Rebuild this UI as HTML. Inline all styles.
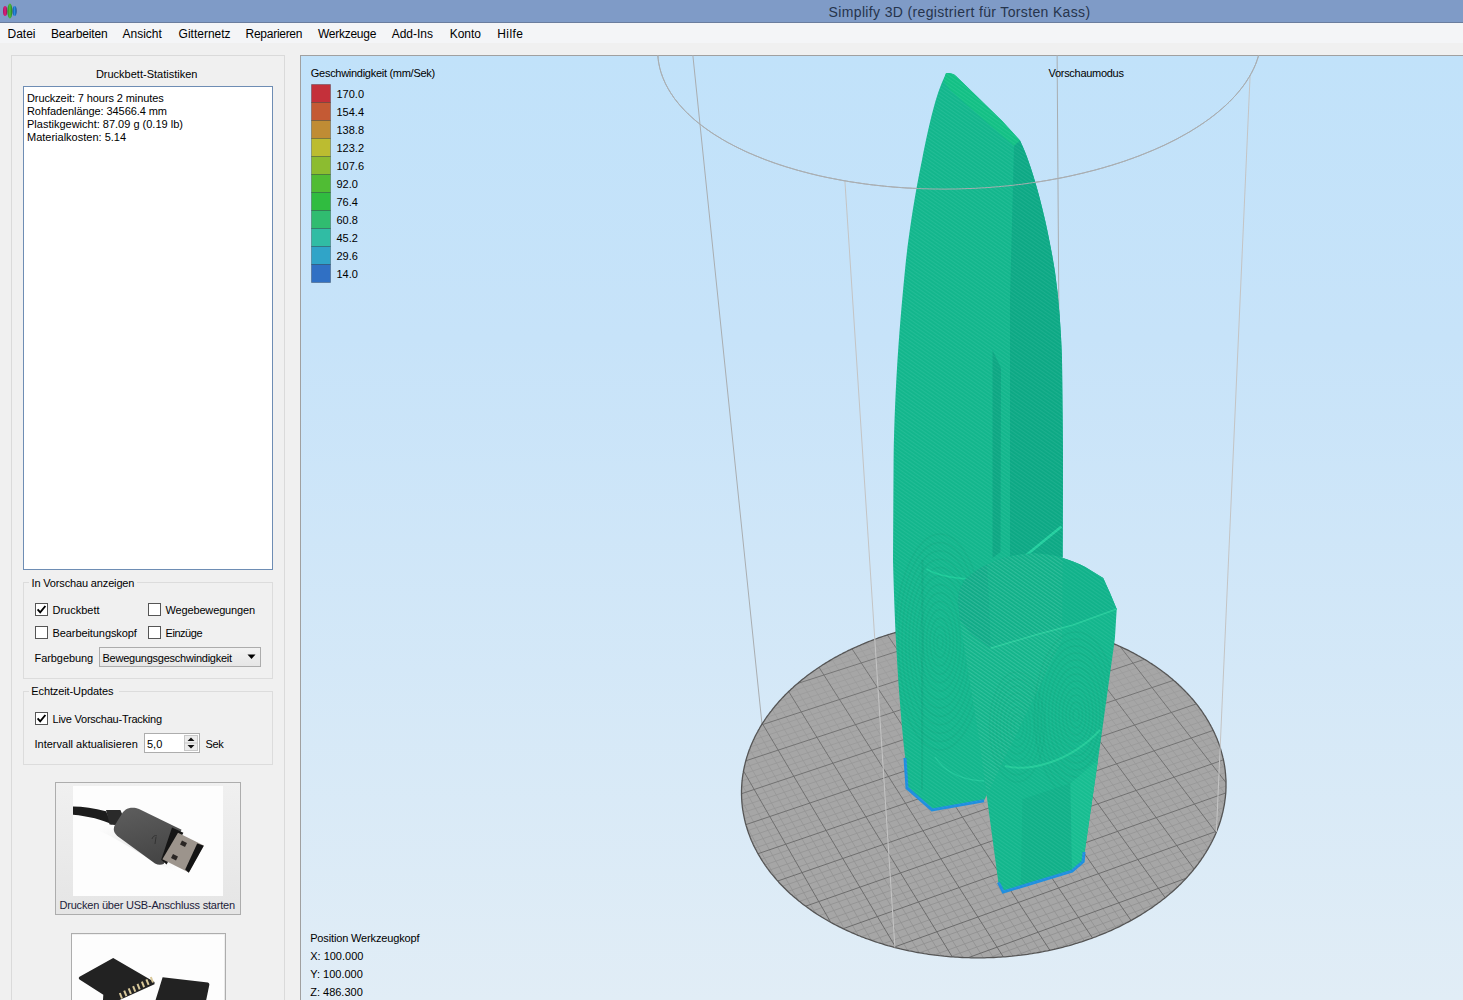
<!DOCTYPE html>
<html><head><meta charset="utf-8"><style>
*{margin:0;padding:0;box-sizing:border-box}
html,body{width:1463px;height:1000px;overflow:hidden;background:#f0f0f0;font-family:"Liberation Sans",sans-serif;font-size:11px;color:#000}
.a{position:absolute}
.t{position:absolute;white-space:nowrap;line-height:1}
</style></head><body>
<div class="a" style="left:0;top:0;width:1463px;height:22px;background:#7f9bc7"></div>
<div class="a" style="left:0;top:22px;width:1463px;height:1px;background:#6a7d9e"></div>
<svg class="a" style="left:0;top:0" width="20" height="22" viewBox="0 0 20 22">
<defs>
<linearGradient id="ip" x1="0" x2="1"><stop offset="0" stop-color="#a0105a"/><stop offset="0.5" stop-color="#e02080"/><stop offset="1" stop-color="#901050"/></linearGradient>
<linearGradient id="ig" x1="0" x2="1"><stop offset="0" stop-color="#2a8a20"/><stop offset="0.5" stop-color="#50c040"/><stop offset="1" stop-color="#207a18"/></linearGradient>
<linearGradient id="ib" x1="0" x2="1"><stop offset="0" stop-color="#1050a0"/><stop offset="0.5" stop-color="#2a90e0"/><stop offset="1" stop-color="#0c4890"/></linearGradient>
</defs>
<ellipse cx="5.1" cy="11" rx="2.1" ry="5" fill="url(#ip)"/>
<ellipse cx="14.6" cy="11" rx="2" ry="5" fill="url(#ib)"/>
<ellipse cx="9.9" cy="11" rx="2.5" ry="7.4" fill="url(#ig)"/>
</svg>
<div class="t" style="left:828.6px;top:5.35px;font-size:14px;color:#26344c;letter-spacing:0.35px;">Simplify 3D (registriert für Torsten Kass)</div>

<div class="a" style="left:0;top:23px;width:1463px;height:20px;background:#f4f5f7"></div>
<div class="t" style="left:7.500000000000001px;top:27.84px;font-size:12px;color:#000;letter-spacing:0px;">Datei</div>

<div class="t" style="left:50.900000000000006px;top:27.84px;font-size:12px;color:#000;letter-spacing:-0.14px;">Bearbeiten</div>

<div class="t" style="left:122.5px;top:27.84px;font-size:12px;color:#000;letter-spacing:0px;">Ansicht</div>

<div class="t" style="left:178.6px;top:27.84px;font-size:12px;color:#000;letter-spacing:0px;">Gitternetz</div>

<div class="t" style="left:245.6px;top:27.84px;font-size:12px;color:#000;letter-spacing:-0.28px;">Reparieren</div>

<div class="t" style="left:317.9px;top:27.84px;font-size:12px;color:#000;letter-spacing:-0.25px;">Werkzeuge</div>

<div class="t" style="left:391.7px;top:27.84px;font-size:12px;color:#000;letter-spacing:0px;">Add-Ins</div>

<div class="t" style="left:449.7px;top:27.84px;font-size:12px;color:#000;letter-spacing:0px;">Konto</div>

<div class="t" style="left:497.2px;top:27.84px;font-size:12px;color:#000;letter-spacing:0.45px;">Hilfe</div>

<div class="a" style="left:11px;top:55px;width:274px;height:960px;border:1px solid #dadada"></div>
<div class="t" style="left:95.9px;top:68.69px;font-size:11px;color:#000;">Druckbett-Statistiken</div>

<div class="a" style="left:23px;top:86px;width:250px;height:484px;background:#fff;border:1px solid #6e8db4"></div>
<div class="t" style="left:27px;top:92.99px;font-size:11px;color:#000;letter-spacing:-0.1px;">Druckzeit: 7 hours 2 minutes</div>

<div class="t" style="left:27px;top:105.99px;font-size:11px;color:#000;letter-spacing:-0.08px;">Rohfadenlänge: 34566.4 mm</div>

<div class="t" style="left:27px;top:118.99px;font-size:11px;color:#000;letter-spacing:0px;">Plastikgewicht: 87.09 g (0.19 lb)</div>

<div class="t" style="left:27px;top:131.99px;font-size:11px;color:#000;letter-spacing:0px;">Materialkosten: 5.14</div>

<div class="a" style="left:23px;top:582px;width:250px;height:97px;border:1px solid #dcdcdc"></div>
<div class="a" style="left:29px;top:576px;width:108px;height:12px;background:#f0f0f0"></div>
<div class="t" style="left:31.5px;top:578.19px;font-size:11px;color:#000;letter-spacing:-0.15px;">In Vorschau anzeigen</div>

<div class="a" style="left:35px;top:603px;width:13px;height:13px;background:#fff;border:1px solid #555"></div><svg class="a" style="left:35px;top:603px" width="13" height="13" viewBox="0 0 13 13"><path d="M2.6 6.4 L5.2 9.3 L10.4 3" fill="none" stroke="#000" stroke-width="1.9" stroke-linejoin="miter"/></svg>
<div class="t" style="left:52.5px;top:604.89px;font-size:11px;color:#000;">Druckbett</div>

<div class="a" style="left:148px;top:603px;width:13px;height:13px;background:#fff;border:1px solid #555"></div>
<div class="t" style="left:165.5px;top:604.89px;font-size:11px;color:#000;letter-spacing:-0.15px;">Wegebewegungen</div>

<div class="a" style="left:35px;top:626px;width:13px;height:13px;background:#fff;border:1px solid #555"></div>
<div class="t" style="left:52.5px;top:627.89px;font-size:11px;color:#000;letter-spacing:-0.08px;">Bearbeitungskopf</div>

<div class="a" style="left:148px;top:626px;width:13px;height:13px;background:#fff;border:1px solid #555"></div>
<div class="t" style="left:165.5px;top:627.89px;font-size:11px;color:#000;letter-spacing:-0.45px;">Einzüge</div>

<div class="t" style="left:34.5px;top:652.69px;font-size:11px;color:#000;letter-spacing:-0.07px;">Farbgebung</div>

<div class="a" style="left:99px;top:647px;width:162px;height:20px;border:1px solid #acacac;background:linear-gradient(#f2f2f2,#e6e6e6)"></div>
<div class="t" style="left:102.5px;top:652.69px;font-size:11px;color:#000;letter-spacing:-0.24px;">Bewegungsgeschwindigkeit</div>

<svg class="a" style="left:246px;top:654px" width="11" height="6" viewBox="0 0 11 6"><path d="M1.5 0.5 L9.5 0.5 L5.5 5 Z" fill="#000"/></svg>
<div class="a" style="left:23px;top:691px;width:250px;height:74px;border:1px solid #dcdcdc"></div>
<div class="a" style="left:29px;top:685px;width:90px;height:12px;background:#f0f0f0"></div>
<div class="t" style="left:31.3px;top:686.19px;font-size:11px;color:#000;letter-spacing:-0.11px;">Echtzeit-Updates</div>

<div class="a" style="left:35px;top:712px;width:13px;height:13px;background:#fff;border:1px solid #555"></div><svg class="a" style="left:35px;top:712px" width="13" height="13" viewBox="0 0 13 13"><path d="M2.6 6.4 L5.2 9.3 L10.4 3" fill="none" stroke="#000" stroke-width="1.9" stroke-linejoin="miter"/></svg>
<div class="t" style="left:52.5px;top:714.19px;font-size:11px;color:#000;letter-spacing:-0.24px;">Live Vorschau-Tracking</div>

<div class="t" style="left:34.5px;top:738.69px;font-size:11px;color:#000;">Intervall aktualisieren</div>

<div class="a" style="left:144px;top:733px;width:56px;height:20px;background:#fff;border:1px solid #adadad"></div>
<div class="t" style="left:147px;top:738.69px;font-size:11px;color:#000;">5,0</div>

<div class="a" style="left:184px;top:735px;width:14px;height:16px;background:#ececec;border:1px solid #c8c8c8"></div>
<svg class="a" style="left:184px;top:735px" width="14" height="16" viewBox="0 0 14 16"><path d="M3.5 6 L10.5 6 L7 2.5 Z M3.5 10 L10.5 10 L7 13.5 Z" fill="#111"/><line x1="1" y1="8" x2="13" y2="8" stroke="#c8c8c8"/></svg>
<div class="t" style="left:205.5px;top:738.69px;font-size:11px;color:#000;letter-spacing:-0.4px;">Sek</div>

<div class="a" style="left:55px;top:782px;width:186px;height:133px;border:1px solid #adadad;background:linear-gradient(#f0f0f0,#e5e5e5)"></div>
<svg class="a" style="left:73px;top:786px" width="150" height="110" viewBox="0 0 150 110">
<defs><linearGradient id="ub" x1="0" y1="0" x2="0.3" y2="1"><stop offset="0" stop-color="#5e5e5e"/><stop offset="1" stop-color="#464646"/></linearGradient>
<radialGradient id="sh" cx="0.5" cy="0.5" r="0.5"><stop offset="0" stop-color="#e4e4e4"/><stop offset="1" stop-color="#fdfdfd"/></radialGradient></defs>
<rect width="150" height="110" fill="#fdfdfd"/>
<path d="M10 40 C40 45 70 75 118 92 L122 86 C80 70 50 40 12 34 Z" fill="url(#sh)" opacity="0.8"/>
<path d="M0 20.4 C10 20.5 21 22 33 25.2 L39 38.4 C30 34 15 30 0 28.8 Z" fill="#1c1c1c"/>
<path d="M33 24 L47.4 24 L50 30 L47.4 39.6 L36.6 38.4 Z" fill="#2a2a2a"/>
<path d="M55.8 22.2 C60 21.5 63 22 66 23 L108.6 43.8 L90.6 78 C88 79 85 79 82 77.5 L45 50.4 C41 47 40 44 41.4 40 L50 26 C52 24 53.5 22.8 55.8 22.2 Z" fill="url(#ub)"/>
<path d="M99 41.4 L110.4 46.8 L93.6 78.6 L88.2 73.8 Z" fill="#151515"/>
<path d="M105 46.8 L130.8 59.4 L115.8 86.4 L89.4 73.2 Z" fill="#9c948c"/>
<path d="M124.2 57.6 L130.8 59.8 L115.8 86.7 L112.2 83.4 Z" fill="#141414"/>
<path d="M109 54.5 L114 57 L112 61 L107 58.5 Z M100 68 L105 70.5 L103 74.5 L98 72 Z" fill="#2a2624"/>
<path d="M79 53 C80 50 82 49 84 50 M83 51 L82 58" stroke="#333" stroke-width="1" fill="none"/>
</svg>
<div class="t" style="left:59.5px;top:900.49px;font-size:11px;color:#1c1c3a;letter-spacing:-0.2px;">Drucken über USB-Anschluss starten</div>

<div class="a" style="left:71px;top:933px;width:155px;height:80px;border:1px solid #adadad;background:linear-gradient(#f0f0f0,#e5e5e5)"></div>
<svg class="a" style="left:72px;top:935px" width="152" height="65" viewBox="0 0 152 65">
<rect width="152" height="65" fill="#fdfdfd"/>
<path d="M41.2 23.1 L82.5 46.9 L82.5 49.3 L47.6 65 L31 65 L31.3 59.7 L7.5 44.6 C6.5 43.5 6.5 42.5 7.5 41.7 Z" fill="#222"/>
<path d="M50.0 63.5 l-2.2 -5.5" stroke="#d8c89a" stroke-width="2"/>
<path d="M54.4 61.2 l-2.2 -5.5" stroke="#d8c89a" stroke-width="2"/>
<path d="M58.9 58.9 l-2.2 -5.5" stroke="#d8c89a" stroke-width="2"/>
<path d="M63.3 56.6 l-2.2 -5.5" stroke="#d8c89a" stroke-width="2"/>
<path d="M67.7 54.4 l-2.2 -5.5" stroke="#d8c89a" stroke-width="2"/>
<path d="M72.1 52.1 l-2.2 -5.5" stroke="#d8c89a" stroke-width="2"/>
<path d="M76.6 49.8 l-2.2 -5.5" stroke="#d8c89a" stroke-width="2"/>
<path d="M81.0 47.5 l-2.2 -5.5" stroke="#d8c89a" stroke-width="2"/>
<path d="M90.6 42.3 L135.9 47.5 C137 48 137.5 49 137.3 50 L134.2 65 L83.6 65 Z" fill="#222"/>
</svg>
<svg class="a" style="left:300px;top:55px" width="1163" height="945" viewBox="300 55 1163 945">
<defs><linearGradient id="bg" x1="0" y1="0" x2="0" y2="1"><stop offset="0" stop-color="#c1e2fa"/><stop offset="0.3" stop-color="#c7e3f9"/><stop offset="1" stop-color="#e1edf6"/></linearGradient></defs>
<rect x="300" y="55" width="1163" height="945" fill="url(#bg)"/>
<line x1="300.5" y1="55" x2="300.5" y2="1000" stroke="#a0a0a0"/>
<line x1="300" y1="55.5" x2="1463" y2="55.5" stroke="#a0a0a0"/>
<defs><clipPath id="bc"><path d="M741.8 784.6 L741.7 786.1 L741.6 787.5 L741.6 789.0 L741.5 790.5 L741.5 792.0 L741.5 793.4 L741.5 794.9 L741.6 796.4 L741.6 797.9 L741.7 799.4 L741.8 800.8 L741.9 802.3 L742.0 803.8 L742.2 805.3 L742.3 806.8 L742.5 808.2 L742.7 809.7 L743.0 811.2 L743.2 812.7 L743.5 814.1 L743.8 815.6 L744.1 817.1 L744.4 818.6 L744.7 820.0 L745.1 821.5 L745.4 823.0 L745.8 824.4 L746.2 825.9 L746.7 827.3 L747.1 828.8 L747.6 830.3 L748.1 831.7 L748.6 833.2 L749.1 834.6 L749.7 836.1 L750.2 837.5 L750.8 838.9 L751.4 840.4 L752.0 841.8 L752.7 843.2 L753.3 844.7 L754.0 846.1 L754.7 847.5 L755.4 848.9 L756.2 850.3 L756.9 851.8 L757.7 853.2 L758.5 854.6 L759.3 855.9 L760.1 857.3 L760.9 858.7 L761.8 860.1 L762.7 861.5 L763.6 862.8 L764.5 864.2 L765.4 865.6 L766.4 866.9 L767.4 868.3 L768.4 869.6 L769.4 871.0 L770.4 872.3 L771.4 873.6 L772.5 874.9 L773.6 876.2 L774.7 877.5 L775.8 878.8 L776.9 880.1 L778.1 881.4 L779.2 882.7 L780.4 884.0 L781.6 885.2 L782.9 886.5 L784.1 887.7 L785.4 889.0 L786.6 890.2 L787.9 891.5 L789.2 892.7 L790.5 893.9 L791.9 895.1 L793.2 896.3 L794.6 897.5 L796.0 898.6 L797.4 899.8 L798.8 901.0 L800.3 902.1 L801.7 903.3 L803.2 904.4 L804.7 905.5 L806.2 906.6 L807.7 907.7 L809.2 908.8 L810.8 909.9 L812.3 911.0 L813.9 912.1 L815.5 913.1 L817.1 914.2 L818.7 915.2 L820.4 916.2 L822.0 917.3 L823.7 918.3 L825.4 919.3 L827.1 920.2 L828.8 921.2 L830.5 922.2 L832.2 923.1 L834.0 924.1 L835.7 925.0 L837.5 925.9 L839.3 926.8 L841.1 927.7 L842.9 928.6 L844.7 929.5 L846.6 930.3 L848.4 931.2 L850.3 932.0 L852.2 932.9 L854.1 933.7 L856.0 934.5 L857.9 935.3 L859.8 936.0 L861.7 936.8 L863.7 937.5 L865.6 938.3 L867.6 939.0 L869.6 939.7 L871.6 940.4 L873.6 941.1 L875.6 941.8 L877.6 942.5 L879.6 943.1 L881.7 943.7 L883.7 944.4 L885.8 945.0 L887.8 945.6 L889.9 946.1 L892.0 946.7 L894.1 947.3 L896.2 947.8 L898.3 948.3 L900.4 948.9 L902.5 949.4 L904.7 949.8 L906.8 950.3 L909.0 950.8 L911.1 951.2 L913.3 951.6 L915.4 952.1 L917.6 952.5 L919.8 952.9 L922.0 953.2 L924.2 953.6 L926.4 953.9 L928.6 954.3 L930.8 954.6 L933.0 954.9 L935.2 955.2 L937.4 955.4 L939.6 955.7 L941.9 955.9 L944.1 956.2 L946.3 956.4 L948.6 956.6 L950.8 956.8 L953.1 956.9 L955.3 957.1 L957.6 957.2 L959.8 957.4 L962.1 957.5 L964.3 957.6 L966.6 957.7 L968.9 957.7 L971.1 957.8 L973.4 957.8 L975.7 957.8 L977.9 957.8 L980.2 957.8 L982.5 957.8 L984.7 957.8 L987.0 957.7 L989.3 957.7 L991.5 957.6 L993.8 957.5 L996.1 957.4 L998.3 957.2 L1000.6 957.1 L1002.9 956.9 L1005.1 956.8 L1007.4 956.6 L1009.6 956.4 L1011.9 956.2 L1014.1 955.9 L1016.4 955.7 L1018.6 955.4 L1020.9 955.2 L1023.1 954.9 L1025.4 954.6 L1027.6 954.3 L1029.8 953.9 L1032.0 953.6 L1034.2 953.2 L1036.5 952.9 L1038.7 952.5 L1040.9 952.1 L1043.1 951.7 L1045.3 951.2 L1047.5 950.8 L1049.6 950.3 L1051.8 949.8 L1054.0 949.4 L1056.1 948.9 L1058.3 948.3 L1060.4 947.8 L1062.6 947.3 L1064.7 946.7 L1066.9 946.1 L1069.0 945.6 L1071.1 945.0 L1073.2 944.4 L1075.3 943.7 L1077.4 943.1 L1079.4 942.4 L1081.5 941.8 L1083.6 941.1 L1085.6 940.4 L1087.7 939.7 L1089.7 939.0 L1091.7 938.3 L1093.7 937.5 L1095.7 936.8 L1097.7 936.0 L1099.7 935.2 L1101.7 934.4 L1103.6 933.6 L1105.6 932.8 L1107.5 932.0 L1109.5 931.1 L1111.4 930.3 L1113.3 929.4 L1115.2 928.5 L1117.1 927.7 L1118.9 926.8 L1120.8 925.8 L1122.6 924.9 L1124.5 924.0 L1126.3 923.0 L1128.1 922.1 L1129.9 921.1 L1131.7 920.1 L1133.4 919.1 L1135.2 918.1 L1136.9 917.1 L1138.6 916.1 L1140.4 915.1 L1142.1 914.0 L1143.7 913.0 L1145.4 911.9 L1147.1 910.8 L1148.7 909.8 L1150.3 908.7 L1152.0 907.6 L1153.5 906.5 L1155.1 905.3 L1156.7 904.2 L1158.2 903.1 L1159.8 901.9 L1161.3 900.8 L1162.8 899.6 L1164.3 898.4 L1165.8 897.2 L1167.2 896.0 L1168.7 894.8 L1170.1 893.6 L1171.5 892.4 L1172.9 891.2 L1174.3 889.9 L1175.6 888.7 L1177.0 887.4 L1178.3 886.2 L1179.6 884.9 L1180.9 883.7 L1182.2 882.4 L1183.4 881.1 L1184.7 879.8 L1185.9 878.5 L1187.1 877.2 L1188.3 875.9 L1189.5 874.5 L1190.6 873.2 L1191.8 871.9 L1192.9 870.5 L1194.0 869.2 L1195.1 867.8 L1196.1 866.5 L1197.2 865.1 L1198.2 863.8 L1199.2 862.4 L1200.2 861.0 L1201.2 859.6 L1202.1 858.2 L1203.1 856.8 L1204.0 855.4 L1204.9 854.0 L1205.8 852.6 L1206.6 851.2 L1207.5 849.8 L1208.3 848.4 L1209.1 846.9 L1209.9 845.5 L1210.7 844.1 L1211.4 842.6 L1212.2 841.2 L1212.9 839.8 L1213.6 838.3 L1214.3 836.9 L1214.9 835.4 L1215.6 833.9 L1216.2 832.5 L1216.8 831.0 L1217.4 829.6 L1217.9 828.1 L1218.5 826.6 L1219.0 825.2 L1219.5 823.7 L1220.0 822.2 L1220.5 820.7 L1220.9 819.3 L1221.3 817.8 L1221.8 816.3 L1222.1 814.8 L1222.5 813.3 L1222.9 811.8 L1223.2 810.4 L1223.5 808.9 L1223.8 807.4 L1224.1 805.9 L1224.4 804.4 L1224.6 802.9 L1224.8 801.4 L1225.0 799.9 L1225.2 798.4 L1225.4 797.0 L1225.5 795.5 L1225.7 794.0 L1225.8 792.5 L1225.9 791.0 L1225.9 789.5 L1226.0 788.0 L1226.0 786.5 L1226.0 785.1 L1226.0 783.6 L1226.0 782.1 L1226.0 780.6 L1225.9 779.1 L1225.8 777.7 L1225.7 776.2 L1225.6 774.7 L1225.5 773.2 L1225.3 771.8 L1225.2 770.3 L1225.0 768.8 L1224.8 767.4 L1224.6 765.9 L1224.3 764.5 L1224.1 763.0 L1223.8 761.6 L1223.5 760.1 L1223.2 758.7 L1222.8 757.2 L1222.5 755.8 L1222.1 754.4 L1221.7 752.9 L1221.3 751.5 L1220.9 750.1 L1220.5 748.6 L1220.0 747.2 L1219.6 745.8 L1219.1 744.4 L1218.6 743.0 L1218.0 741.6 L1217.5 740.2 L1217.0 738.8 L1216.4 737.4 L1215.8 736.0 L1215.2 734.7 L1214.6 733.3 L1213.9 731.9 L1213.3 730.6 L1212.6 729.2 L1211.9 727.8 L1211.2 726.5 L1210.5 725.1 L1209.7 723.8 L1209.0 722.5 L1208.2 721.1 L1207.4 719.8 L1206.6 718.5 L1205.8 717.2 L1205.0 715.9 L1204.1 714.6 L1203.3 713.3 L1202.4 712.0 L1201.5 710.7 L1200.6 709.5 L1199.6 708.2 L1198.7 706.9 L1197.8 705.7 L1196.8 704.4 L1195.8 703.2 L1194.8 702.0 L1193.8 700.7 L1192.8 699.5 L1191.7 698.3 L1190.7 697.1 L1189.6 695.9 L1188.5 694.7 L1187.4 693.5 L1186.3 692.4 L1185.2 691.2 L1184.0 690.0 L1182.9 688.9 L1181.7 687.7 L1180.5 686.6 L1179.3 685.5 L1178.1 684.3 L1176.9 683.2 L1175.7 682.1 L1174.4 681.0 L1173.2 679.9 L1171.9 678.8 L1170.6 677.8 L1169.3 676.7 L1168.0 675.6 L1166.7 674.6 L1165.3 673.6 L1164.0 672.5 L1162.6 671.5 L1161.3 670.5 L1159.9 669.5 L1158.5 668.5 L1157.1 667.5 L1155.7 666.5 L1154.3 665.5 L1152.8 664.6 L1151.4 663.6 L1149.9 662.7 L1148.4 661.7 L1147.0 660.8 L1145.5 659.9 L1144.0 659.0 L1142.4 658.1 L1140.9 657.2 L1139.4 656.3 L1137.8 655.5 L1136.3 654.6 L1134.7 653.7 L1133.2 652.9 L1131.6 652.1 L1130.0 651.2 L1128.4 650.4 L1126.8 649.6 L1125.1 648.8 L1123.5 648.1 L1121.9 647.3 L1120.2 646.5 L1118.6 645.8 L1116.9 645.0 L1115.2 644.3 L1113.6 643.6 L1111.9 642.8 L1110.2 642.1 L1108.5 641.5 L1106.8 640.8 L1105.0 640.1 L1103.3 639.4 L1101.6 638.8 L1099.8 638.1 L1098.1 637.5 L1096.3 636.9 L1094.6 636.3 L1092.8 635.7 L1091.0 635.1 L1089.2 634.5 L1087.4 633.9 L1085.6 633.4 L1083.8 632.8 L1082.0 632.3 L1080.2 631.8 L1078.4 631.3 L1076.5 630.7 L1074.7 630.3 L1072.9 629.8 L1071.0 629.3 L1069.2 628.8 L1067.3 628.4 L1065.5 627.9 L1063.6 627.5 L1061.7 627.1 L1059.8 626.7 L1058.0 626.3 L1056.1 625.9 L1054.2 625.5 L1052.3 625.2 L1050.4 624.8 L1048.5 624.5 L1046.6 624.1 L1044.7 623.8 L1042.7 623.5 L1040.8 623.2 L1038.9 622.9 L1037.0 622.6 L1035.1 622.4 L1033.1 622.1 L1031.2 621.9 L1029.3 621.6 L1027.3 621.4 L1025.4 621.2 L1023.4 621.0 L1021.5 620.8 L1019.5 620.7 L1017.6 620.5 L1015.6 620.3 L1013.7 620.2 L1011.7 620.1 L1009.7 619.9 L1007.8 619.8 L1005.8 619.7 L1003.9 619.6 L1001.9 619.6 L999.9 619.5 L998.0 619.5 L996.0 619.4 L994.0 619.4 L992.1 619.4 L990.1 619.4 L988.1 619.4 L986.1 619.4 L984.2 619.4 L982.2 619.4 L980.2 619.5 L978.3 619.5 L976.3 619.6 L974.3 619.7 L972.4 619.8 L970.4 619.9 L968.4 620.0 L966.5 620.1 L964.5 620.3 L962.5 620.4 L960.6 620.6 L958.6 620.7 L956.6 620.9 L954.7 621.1 L952.7 621.3 L950.8 621.5 L948.8 621.8 L946.9 622.0 L944.9 622.2 L943.0 622.5 L941.0 622.8 L939.1 623.0 L937.2 623.3 L935.2 623.6 L933.3 624.0 L931.4 624.3 L929.4 624.6 L927.5 625.0 L925.6 625.3 L923.7 625.7 L921.8 626.1 L919.9 626.5 L918.0 626.9 L916.1 627.3 L914.2 627.7 L912.3 628.1 L910.4 628.6 L908.5 629.0 L906.6 629.5 L904.8 630.0 L902.9 630.5 L901.0 631.0 L899.2 631.5 L897.3 632.0 L895.5 632.5 L893.6 633.0 L891.8 633.6 L890.0 634.2 L888.2 634.7 L886.3 635.3 L884.5 635.9 L882.7 636.5 L880.9 637.1 L879.1 637.7 L877.3 638.4 L875.6 639.0 L873.8 639.7 L872.0 640.3 L870.3 641.0 L868.5 641.7 L866.8 642.4 L865.0 643.1 L863.3 643.8 L861.6 644.5 L859.9 645.3 L858.2 646.0 L856.5 646.8 L854.8 647.5 L853.1 648.3 L851.4 649.1 L849.8 649.9 L848.1 650.7 L846.5 651.5 L844.8 652.3 L843.2 653.1 L841.6 654.0 L839.9 654.8 L838.3 655.7 L836.8 656.6 L835.2 657.4 L833.6 658.3 L832.0 659.2 L830.5 660.1 L828.9 661.1 L827.4 662.0 L825.9 662.9 L824.4 663.9 L822.8 664.8 L821.4 665.8 L819.9 666.7 L818.4 667.7 L816.9 668.7 L815.5 669.7 L814.0 670.7 L812.6 671.7 L811.2 672.7 L809.8 673.8 L808.4 674.8 L807.0 675.8 L805.6 676.9 L804.3 678.0 L802.9 679.0 L801.6 680.1 L800.3 681.2 L799.0 682.3 L797.7 683.4 L796.4 684.5 L795.1 685.6 L793.8 686.7 L792.6 687.9 L791.3 689.0 L790.1 690.2 L788.9 691.3 L787.7 692.5 L786.5 693.6 L785.3 694.8 L784.2 696.0 L783.0 697.2 L781.9 698.4 L780.8 699.6 L779.7 700.8 L778.6 702.0 L777.5 703.3 L776.5 704.5 L775.4 705.7 L774.4 707.0 L773.4 708.2 L772.4 709.5 L771.4 710.8 L770.4 712.0 L769.4 713.3 L768.5 714.6 L767.5 715.9 L766.6 717.2 L765.7 718.5 L764.8 719.8 L764.0 721.1 L763.1 722.4 L762.3 723.7 L761.4 725.1 L760.6 726.4 L759.8 727.8 L759.1 729.1 L758.3 730.4 L757.6 731.8 L756.8 733.2 L756.1 734.5 L755.4 735.9 L754.7 737.3 L754.1 738.6 L753.4 740.0 L752.8 741.4 L752.2 742.8 L751.6 744.2 L751.0 745.6 L750.4 747.0 L749.9 748.4 L749.3 749.8 L748.8 751.2 L748.3 752.7 L747.8 754.1 L747.4 755.5 L746.9 756.9 L746.5 758.4 L746.1 759.8 L745.7 761.2 L745.3 762.7 L745.0 764.1 L744.6 765.6 L744.3 767.0 L744.0 768.5 L743.7 769.9 L743.4 771.4 L743.2 772.9 L742.9 774.3 L742.7 775.8 L742.5 777.2 L742.3 778.7 L742.2 780.2 L742.0 781.6 L741.9 783.1 Z"/></clipPath><linearGradient id="mg" gradientUnits="userSpaceOnUse" x1="0" y1="630" x2="0" y2="960"><stop offset="0" stop-color="#9e9e9e"/><stop offset="1" stop-color="#8e8e8e"/></linearGradient><linearGradient id="Mg" gradientUnits="userSpaceOnUse" x1="0" y1="630" x2="0" y2="960"><stop offset="0" stop-color="#727272"/><stop offset="1" stop-color="#636363"/></linearGradient></defs>
<path d="M658.5 40.6 L658.3 41.9 L658.2 43.2 L658.1 44.4 L657.9 45.7 L657.9 47.0 L657.8 48.2 L657.8 49.5 L657.7 50.8 L657.7 52.1 L657.8 53.3 L657.8 54.6 L657.9 55.9 L658.0 57.1 L658.1 58.4 L658.3 59.7 L658.4 61.0 L658.6 62.2 L658.8 63.5 L659.1 64.8 L659.4 66.0 L659.6 67.3 L659.9 68.6 L660.3 69.8 L660.6 71.1 L661.0 72.4 L661.4 73.6 L661.9 74.9 L662.3 76.2 L662.8 77.4 L663.3 78.7 L663.8 79.9 L664.4 81.2 L664.9 82.4 L665.5 83.7 L666.1 84.9 L666.8 86.2 L667.5 87.4 L668.1 88.7 L668.9 89.9 L669.6 91.1 L670.4 92.4 L671.1 93.6 L672.0 94.8 L672.8 96.0 L673.6 97.3 L674.5 98.5 L675.4 99.7 L676.4 100.9 L677.3 102.1 L678.3 103.3 L679.3 104.5 L680.3 105.7 L681.4 106.9 L682.4 108.0 L683.5 109.2 L684.6 110.4 L685.8 111.6 L686.9 112.7 L688.1 113.9 L689.3 115.0 L690.6 116.2 L691.8 117.3 L693.1 118.5 L694.4 119.6 L695.7 120.7 L697.1 121.9 L698.5 123.0 L699.9 124.1 L701.3 125.2 L702.7 126.3 L704.2 127.4 L705.7 128.5 L707.2 129.6 L708.7 130.6 L710.2 131.7 L711.8 132.8 L713.4 133.8 L715.0 134.9 L716.7 135.9 L718.3 136.9 L720.0 137.9 L721.7 139.0 L723.4 140.0 L725.2 141.0 L726.9 142.0 L728.7 143.0 L730.5 143.9 L732.4 144.9 L734.2 145.9 L736.1 146.8 L738.0 147.8 L739.9 148.7 L741.8 149.6 L743.8 150.6 L745.7 151.5 L747.7 152.4 L749.7 153.3 L751.8 154.1 L753.8 155.0 L755.9 155.9 L758.0 156.7 L760.1 157.6 L762.2 158.4 L764.3 159.3 L766.5 160.1 L768.7 160.9 L770.9 161.7 L773.1 162.5 L775.3 163.3 L777.5 164.0 L779.8 164.8 L782.1 165.5 L784.4 166.3 L786.7 167.0 L789.0 167.7 L791.4 168.4 L793.7 169.1 L796.1 169.8 L798.5 170.5 L800.9 171.1 L803.3 171.8 L805.8 172.4 L808.2 173.1 L810.7 173.7 L813.2 174.3 L815.6 174.9 L818.2 175.5 L820.7 176.1 L823.2 176.6 L825.8 177.2 L828.3 177.7 L830.9 178.2 L833.5 178.7 L836.1 179.2 L838.7 179.7 L841.3 180.2 L843.9 180.7 L846.6 181.1 L849.2 181.6 L851.9 182.0 L854.6 182.4 L857.3 182.8 L860.0 183.2 L862.7 183.6 L865.4 184.0 L868.1 184.3 L870.8 184.7 L873.6 185.0 L876.3 185.3 L879.1 185.6 L881.8 185.9 L884.6 186.2 L887.4 186.5 L890.2 186.7 L893.0 187.0 L895.8 187.2 L898.6 187.4 L901.4 187.6 L904.2 187.8 L907.0 188.0 L909.9 188.1 L912.7 188.3 L915.5 188.4 L918.4 188.5 L921.2 188.7 L924.1 188.8 L926.9 188.8 L929.8 188.9 L932.7 189.0 L935.5 189.0 L938.4 189.0 L941.2 189.1 L944.1 189.1 L947.0 189.1 L949.9 189.0 L952.7 189.0 L955.6 189.0 L958.5 188.9 L961.4 188.8 L964.2 188.7 L967.1 188.6 L970.0 188.5 L972.9 188.4 L975.7 188.3 L978.6 188.1 L981.5 187.9 L984.3 187.8 L987.2 187.6 L990.0 187.4 L992.9 187.1 L995.8 186.9 L998.6 186.7 L1001.5 186.4 L1004.3 186.1 L1007.1 185.9 L1010.0 185.6 L1012.8 185.3 L1015.6 184.9 L1018.4 184.6 L1021.3 184.3 L1024.1 183.9 L1026.9 183.5 L1029.7 183.1 L1032.4 182.7 L1035.2 182.3 L1038.0 181.9 L1040.8 181.5 L1043.5 181.0 L1046.3 180.6 L1049.0 180.1 L1051.7 179.6 L1054.5 179.1 L1057.2 178.6 L1059.9 178.1 L1062.6 177.6 L1065.3 177.0 L1067.9 176.5 L1070.6 175.9 L1073.3 175.3 L1075.9 174.7 L1078.5 174.1 L1081.1 173.5 L1083.8 172.9 L1086.4 172.2 L1088.9 171.6 L1091.5 170.9 L1094.1 170.3 L1096.6 169.6 L1099.1 168.9 L1101.7 168.2 L1104.2 167.5 L1106.7 166.7 L1109.1 166.0 L1111.6 165.3 L1114.1 164.5 L1116.5 163.7 L1118.9 163.0 L1121.3 162.2 L1123.7 161.4 L1126.1 160.6 L1128.4 159.7 L1130.8 158.9 L1133.1 158.1 L1135.4 157.2 L1137.7 156.4 L1140.0 155.5 L1142.2 154.6 L1144.5 153.7 L1146.7 152.8 L1148.9 151.9 L1151.1 151.0 L1153.3 150.1 L1155.4 149.2 L1157.6 148.2 L1159.7 147.3 L1161.8 146.3 L1163.9 145.4 L1165.9 144.4 L1168.0 143.4 L1170.0 142.4 L1172.0 141.4 L1174.0 140.4 L1176.0 139.4 L1177.9 138.4 L1179.8 137.3 L1181.7 136.3 L1183.6 135.2 L1185.5 134.2 L1187.3 133.1 L1189.2 132.1 L1191.0 131.0 L1192.7 129.9 L1194.5 128.8 L1196.3 127.7 L1198.0 126.6 L1199.7 125.5 L1201.3 124.4 L1203.0 123.3 L1204.6 122.2 L1206.2 121.0 L1207.8 119.9 L1209.4 118.8 L1210.9 117.6 L1212.5 116.4 L1214.0 115.3 L1215.4 114.1 L1216.9 113.0 L1218.3 111.8 L1219.7 110.6 L1221.1 109.4 L1222.5 108.2 L1223.8 107.0 L1225.2 105.8 L1226.5 104.6 L1227.7 103.4 L1229.0 102.2 L1230.2 101.0 L1231.4 99.8 L1232.6 98.5 L1233.7 97.3 L1234.9 96.1 L1236.0 94.9 L1237.1 93.6 L1238.1 92.4 L1239.2 91.1 L1240.2 89.9 L1241.2 88.6 L1242.1 87.4 L1243.1 86.1 L1244.0 84.9 L1244.9 83.6 L1245.8 82.3 L1246.6 81.1 L1247.4 79.8 L1248.2 78.5 L1249.0 77.3 L1249.8 76.0 L1250.5 74.7 L1251.2 73.4 L1251.9 72.2 L1252.5 70.9 L1253.2 69.6 L1253.8 68.3 L1254.4 67.0 L1254.9 65.8 L1255.5 64.5 L1256.0 63.2 L1256.5 61.9 L1256.9 60.6 L1257.4 59.3 L1257.8 58.0 L1258.2 56.8 L1258.6 55.5 L1258.9 54.2 L1259.2 52.9 L1259.5 51.6 L1259.8 50.3 L1260.1 49.0 L1260.3 47.7 L1260.5 46.5 L1260.7 45.2 L1260.8 43.9 L1261.0 42.6 L1261.1 41.3 L1261.1 40.1 L1261.2 38.8 L1261.3 37.5 L1261.3 36.2 L1261.3 34.9 L1261.2 33.7 L1261.2 32.4 L1261.1 31.1 L1261.0 29.9 L1260.9 28.6 L1260.7 27.3 L1260.6 26.1 L1260.4 24.8 L1260.2 23.6 L1259.9 22.3 L1259.7 21.1 L1259.4 19.8 L1259.1 18.6 L1258.7 17.3 L1258.4 16.1 L1258.0 14.8 L1257.6 13.6 L1257.2 12.4 L1256.8 11.1 L1256.3 9.9 L1255.8 8.7 L1255.3 7.5 L1254.8 6.3 L1254.3 5.1 L1253.7 3.9 L1253.1 2.7 L1252.5 1.5 L1251.9 0.3 L1251.2 -0.9 L1250.6 -2.1 L1249.9 -3.3 L1249.2 -4.5 L1248.4 -5.6 L1247.7 -6.8 L1246.9 -8.0 L1246.1 -9.1 L1245.3 -10.3 L1244.4 -11.4 L1243.6 -12.6 L1242.7 -13.7 L1241.8 -14.9 L1240.9 -16.0 L1240.0 -17.1 L1239.0 -18.2 L1238.0 -19.4 L1237.0 -20.5 L1236.0 -21.6 L1235.0 -22.7 L1233.9 -23.8 L1232.9 -24.9 L1231.8 -25.9 L1230.7 -27.0 L1229.5 -28.1 L1228.4 -29.1 L1227.2 -30.2 L1226.1 -31.3 L1224.9 -32.3 L1223.6 -33.3 L1222.4 -34.4 L1221.2 -35.4 L1219.9 -36.4 L1218.6 -37.5 L1217.3 -38.5 L1216.0 -39.5 L1214.6 -40.5 L1213.3 -41.5 L1211.9 -42.4 L1210.5 -43.4 L1209.1 -44.4 L1207.7 -45.3 L1206.2 -46.3 L1204.8 -47.3 L1203.3 -48.2 L1201.8 -49.1 L1200.3 -50.1 L1198.8 -51.0 L1197.3 -51.9 L1195.7 -52.8 L1194.2 -53.7 L1192.6 -54.6 L1191.0 -55.5 L1189.4 -56.4 L1187.8 -57.2 L1186.1 -58.1 L1184.5 -59.0 L1182.8 -59.8 L1181.1 -60.7 L1179.4 -61.5 L1177.7 -62.3 L1176.0 -63.1 L1174.2 -63.9 L1172.5 -64.8 L1170.7 -65.5 L1168.9 -66.3 L1167.1 -67.1 L1165.3 -67.9 L1163.5 -68.7 L1161.7 -69.4 L1159.9 -70.2 L1158.0 -70.9 L1156.1 -71.6 L1154.3 -72.4 L1152.4 -73.1 L1150.5 -73.8 L1148.5 -74.5 L1146.6 -75.2 L1144.7 -75.9 L1142.7 -76.5 L1140.8 -77.2 L1138.8 -77.9 L1136.8 -78.5 L1134.8 -79.1 L1132.8 -79.8 L1130.8 -80.4 L1128.8 -81.0 L1126.7 -81.6 L1124.7 -82.2 L1122.6 -82.8 L1120.5 -83.4 L1118.5 -84.0 L1116.4 -84.5 L1114.3 -85.1 L1112.2 -85.6 L1110.1 -86.2 L1107.9 -86.7 L1105.8 -87.2 L1103.7 -87.7 L1101.5 -88.3 L1099.4 -88.7 L1097.2 -89.2 L1095.0 -89.7 L1092.8 -90.2 L1090.6 -90.6 L1088.5 -91.1 L1086.2 -91.5 L1084.0 -92.0 L1081.8 -92.4 L1079.6 -92.8 L1077.3 -93.2 L1075.1 -93.6 L1072.9 -94.0 L1070.6 -94.4 L1068.3 -94.7 L1066.1 -95.1 L1063.8 -95.5 L1061.5 -95.8 L1059.2 -96.1 L1056.9 -96.5 L1054.6 -96.8 L1052.3 -97.1 L1050.0 -97.4 L1047.7 -97.7 L1045.4 -97.9 L1043.1 -98.2 L1040.7 -98.5 L1038.4 -98.7 L1036.0 -99.0 L1033.7 -99.2 L1031.4 -99.4 L1029.0 -99.6 L1026.6 -99.8 L1024.3 -100.0 L1021.9 -100.2 L1019.6 -100.4 L1017.2 -100.6 L1014.8 -100.7 L1012.4 -100.9 L1010.1 -101.0 L1007.7 -101.1 L1005.3 -101.3 L1002.9 -101.4 L1000.5 -101.5 L998.1 -101.6 L995.7 -101.7 L993.3 -101.7 L990.9 -101.8 L988.5 -101.9 L986.1 -101.9 L983.7 -101.9 L981.3 -102.0 L978.9 -102.0 L976.5 -102.0 L974.1 -102.0 L971.7 -102.0 L969.2 -102.0 L966.8 -101.9 L964.4 -101.9 L962.0 -101.9 L959.6 -101.8 L957.2 -101.7 L954.8 -101.7 L952.4 -101.6 L950.0 -101.5 L947.5 -101.4 L945.1 -101.3 L942.7 -101.2 L940.3 -101.0 L937.9 -100.9 L935.5 -100.7 L933.1 -100.6 L930.7 -100.4 L928.3 -100.2 L925.9 -100.1 L923.5 -99.9 L921.1 -99.7 L918.7 -99.4 L916.3 -99.2 L913.9 -99.0 L911.5 -98.8 L909.2 -98.5 L906.8 -98.2 L904.4 -98.0 L902.0 -97.7 L899.7 -97.4 L897.3 -97.1 L894.9 -96.8 L892.6 -96.5 L890.2 -96.2 L887.9 -95.9 L885.5 -95.5 L883.2 -95.2 L880.8 -94.8 L878.5 -94.4 L876.2 -94.1 L873.8 -93.7 L871.5 -93.3 L869.2 -92.9 L866.9 -92.5 L864.6 -92.1 L862.3 -91.6 L860.0 -91.2 L857.7 -90.7 L855.5 -90.3 L853.2 -89.8 L850.9 -89.3 L848.7 -88.9 L846.4 -88.4 L844.1 -87.9 L841.9 -87.4 L839.7 -86.9 L837.4 -86.3 L835.2 -85.8 L833.0 -85.3 L830.8 -84.7 L828.6 -84.1 L826.4 -83.6 L824.2 -83.0 L822.1 -82.4 L819.9 -81.8 L817.8 -81.2 L815.6 -80.6 L813.5 -80.0 L811.3 -79.4 L809.2 -78.7 L807.1 -78.1 L805.0 -77.4 L802.9 -76.8 L800.8 -76.1 L798.7 -75.4 L796.7 -74.8 L794.6 -74.1 L792.6 -73.4 L790.5 -72.7 L788.5 -71.9 L786.5 -71.2 L784.5 -70.5 L782.5 -69.7 L780.5 -69.0 L778.6 -68.2 L776.6 -67.5 L774.6 -66.7 L772.7 -65.9 L770.8 -65.1 L768.9 -64.4 L767.0 -63.6 L765.1 -62.7 L763.2 -61.9 L761.3 -61.1 L759.5 -60.3 L757.6 -59.4 L755.8 -58.6 L754.0 -57.7 L752.2 -56.9 L750.4 -56.0 L748.6 -55.1 L746.8 -54.3 L745.1 -53.4 L743.4 -52.5 L741.6 -51.6 L739.9 -50.7 L738.2 -49.7 L736.6 -48.8 L734.9 -47.9 L733.2 -47.0 L731.6 -46.0 L730.0 -45.1 L728.4 -44.1 L726.8 -43.1 L725.2 -42.2 L723.6 -41.2 L722.1 -40.2 L720.5 -39.2 L719.0 -38.2 L717.5 -37.2 L716.0 -36.2 L714.6 -35.2 L713.1 -34.2 L711.7 -33.2 L710.2 -32.1 L708.8 -31.1 L707.4 -30.1 L706.1 -29.0 L704.7 -28.0 L703.4 -26.9 L702.0 -25.8 L700.7 -24.8 L699.5 -23.7 L698.2 -22.6 L696.9 -21.5 L695.7 -20.4 L694.5 -19.3 L693.3 -18.2 L692.1 -17.1 L690.9 -16.0 L689.8 -14.9 L688.6 -13.8 L687.5 -12.6 L686.4 -11.5 L685.4 -10.4 L684.3 -9.2 L683.3 -8.1 L682.3 -6.9 L681.3 -5.8 L680.3 -4.6 L679.3 -3.4 L678.4 -2.3 L677.5 -1.1 L676.6 0.1 L675.7 1.3 L674.8 2.4 L674.0 3.6 L673.2 4.8 L672.4 6.0 L671.6 7.2 L670.8 8.4 L670.1 9.6 L669.4 10.8 L668.7 12.0 L668.0 13.3 L667.3 14.5 L666.7 15.7 L666.1 16.9 L665.5 18.1 L664.9 19.4 L664.4 20.6 L663.8 21.8 L663.3 23.1 L662.9 24.3 L662.4 25.6 L661.9 26.8 L661.5 28.1 L661.1 29.3 L660.7 30.6 L660.4 31.8 L660.1 33.1 L659.7 34.3 L659.5 35.6 L659.2 36.8 L658.9 38.1 L658.7 39.4 Z" fill="none" stroke="#a9adb0" stroke-width="1"/>
<line x1="762.0" y1="724.2" x2="686.0" y2="-11.1" stroke="#a9adb0"/>
<line x1="1061.0" y1="626.9" x2="1056.1" y2="-96.6" stroke="#a9adb0"/>
<path d="M741.8 784.6 L741.7 786.1 L741.6 787.5 L741.6 789.0 L741.5 790.5 L741.5 792.0 L741.5 793.4 L741.5 794.9 L741.6 796.4 L741.6 797.9 L741.7 799.4 L741.8 800.8 L741.9 802.3 L742.0 803.8 L742.2 805.3 L742.3 806.8 L742.5 808.2 L742.7 809.7 L743.0 811.2 L743.2 812.7 L743.5 814.1 L743.8 815.6 L744.1 817.1 L744.4 818.6 L744.7 820.0 L745.1 821.5 L745.4 823.0 L745.8 824.4 L746.2 825.9 L746.7 827.3 L747.1 828.8 L747.6 830.3 L748.1 831.7 L748.6 833.2 L749.1 834.6 L749.7 836.1 L750.2 837.5 L750.8 838.9 L751.4 840.4 L752.0 841.8 L752.7 843.2 L753.3 844.7 L754.0 846.1 L754.7 847.5 L755.4 848.9 L756.2 850.3 L756.9 851.8 L757.7 853.2 L758.5 854.6 L759.3 855.9 L760.1 857.3 L760.9 858.7 L761.8 860.1 L762.7 861.5 L763.6 862.8 L764.5 864.2 L765.4 865.6 L766.4 866.9 L767.4 868.3 L768.4 869.6 L769.4 871.0 L770.4 872.3 L771.4 873.6 L772.5 874.9 L773.6 876.2 L774.7 877.5 L775.8 878.8 L776.9 880.1 L778.1 881.4 L779.2 882.7 L780.4 884.0 L781.6 885.2 L782.9 886.5 L784.1 887.7 L785.4 889.0 L786.6 890.2 L787.9 891.5 L789.2 892.7 L790.5 893.9 L791.9 895.1 L793.2 896.3 L794.6 897.5 L796.0 898.6 L797.4 899.8 L798.8 901.0 L800.3 902.1 L801.7 903.3 L803.2 904.4 L804.7 905.5 L806.2 906.6 L807.7 907.7 L809.2 908.8 L810.8 909.9 L812.3 911.0 L813.9 912.1 L815.5 913.1 L817.1 914.2 L818.7 915.2 L820.4 916.2 L822.0 917.3 L823.7 918.3 L825.4 919.3 L827.1 920.2 L828.8 921.2 L830.5 922.2 L832.2 923.1 L834.0 924.1 L835.7 925.0 L837.5 925.9 L839.3 926.8 L841.1 927.7 L842.9 928.6 L844.7 929.5 L846.6 930.3 L848.4 931.2 L850.3 932.0 L852.2 932.9 L854.1 933.7 L856.0 934.5 L857.9 935.3 L859.8 936.0 L861.7 936.8 L863.7 937.5 L865.6 938.3 L867.6 939.0 L869.6 939.7 L871.6 940.4 L873.6 941.1 L875.6 941.8 L877.6 942.5 L879.6 943.1 L881.7 943.7 L883.7 944.4 L885.8 945.0 L887.8 945.6 L889.9 946.1 L892.0 946.7 L894.1 947.3 L896.2 947.8 L898.3 948.3 L900.4 948.9 L902.5 949.4 L904.7 949.8 L906.8 950.3 L909.0 950.8 L911.1 951.2 L913.3 951.6 L915.4 952.1 L917.6 952.5 L919.8 952.9 L922.0 953.2 L924.2 953.6 L926.4 953.9 L928.6 954.3 L930.8 954.6 L933.0 954.9 L935.2 955.2 L937.4 955.4 L939.6 955.7 L941.9 955.9 L944.1 956.2 L946.3 956.4 L948.6 956.6 L950.8 956.8 L953.1 956.9 L955.3 957.1 L957.6 957.2 L959.8 957.4 L962.1 957.5 L964.3 957.6 L966.6 957.7 L968.9 957.7 L971.1 957.8 L973.4 957.8 L975.7 957.8 L977.9 957.8 L980.2 957.8 L982.5 957.8 L984.7 957.8 L987.0 957.7 L989.3 957.7 L991.5 957.6 L993.8 957.5 L996.1 957.4 L998.3 957.2 L1000.6 957.1 L1002.9 956.9 L1005.1 956.8 L1007.4 956.6 L1009.6 956.4 L1011.9 956.2 L1014.1 955.9 L1016.4 955.7 L1018.6 955.4 L1020.9 955.2 L1023.1 954.9 L1025.4 954.6 L1027.6 954.3 L1029.8 953.9 L1032.0 953.6 L1034.2 953.2 L1036.5 952.9 L1038.7 952.5 L1040.9 952.1 L1043.1 951.7 L1045.3 951.2 L1047.5 950.8 L1049.6 950.3 L1051.8 949.8 L1054.0 949.4 L1056.1 948.9 L1058.3 948.3 L1060.4 947.8 L1062.6 947.3 L1064.7 946.7 L1066.9 946.1 L1069.0 945.6 L1071.1 945.0 L1073.2 944.4 L1075.3 943.7 L1077.4 943.1 L1079.4 942.4 L1081.5 941.8 L1083.6 941.1 L1085.6 940.4 L1087.7 939.7 L1089.7 939.0 L1091.7 938.3 L1093.7 937.5 L1095.7 936.8 L1097.7 936.0 L1099.7 935.2 L1101.7 934.4 L1103.6 933.6 L1105.6 932.8 L1107.5 932.0 L1109.5 931.1 L1111.4 930.3 L1113.3 929.4 L1115.2 928.5 L1117.1 927.7 L1118.9 926.8 L1120.8 925.8 L1122.6 924.9 L1124.5 924.0 L1126.3 923.0 L1128.1 922.1 L1129.9 921.1 L1131.7 920.1 L1133.4 919.1 L1135.2 918.1 L1136.9 917.1 L1138.6 916.1 L1140.4 915.1 L1142.1 914.0 L1143.7 913.0 L1145.4 911.9 L1147.1 910.8 L1148.7 909.8 L1150.3 908.7 L1152.0 907.6 L1153.5 906.5 L1155.1 905.3 L1156.7 904.2 L1158.2 903.1 L1159.8 901.9 L1161.3 900.8 L1162.8 899.6 L1164.3 898.4 L1165.8 897.2 L1167.2 896.0 L1168.7 894.8 L1170.1 893.6 L1171.5 892.4 L1172.9 891.2 L1174.3 889.9 L1175.6 888.7 L1177.0 887.4 L1178.3 886.2 L1179.6 884.9 L1180.9 883.7 L1182.2 882.4 L1183.4 881.1 L1184.7 879.8 L1185.9 878.5 L1187.1 877.2 L1188.3 875.9 L1189.5 874.5 L1190.6 873.2 L1191.8 871.9 L1192.9 870.5 L1194.0 869.2 L1195.1 867.8 L1196.1 866.5 L1197.2 865.1 L1198.2 863.8 L1199.2 862.4 L1200.2 861.0 L1201.2 859.6 L1202.1 858.2 L1203.1 856.8 L1204.0 855.4 L1204.9 854.0 L1205.8 852.6 L1206.6 851.2 L1207.5 849.8 L1208.3 848.4 L1209.1 846.9 L1209.9 845.5 L1210.7 844.1 L1211.4 842.6 L1212.2 841.2 L1212.9 839.8 L1213.6 838.3 L1214.3 836.9 L1214.9 835.4 L1215.6 833.9 L1216.2 832.5 L1216.8 831.0 L1217.4 829.6 L1217.9 828.1 L1218.5 826.6 L1219.0 825.2 L1219.5 823.7 L1220.0 822.2 L1220.5 820.7 L1220.9 819.3 L1221.3 817.8 L1221.8 816.3 L1222.1 814.8 L1222.5 813.3 L1222.9 811.8 L1223.2 810.4 L1223.5 808.9 L1223.8 807.4 L1224.1 805.9 L1224.4 804.4 L1224.6 802.9 L1224.8 801.4 L1225.0 799.9 L1225.2 798.4 L1225.4 797.0 L1225.5 795.5 L1225.7 794.0 L1225.8 792.5 L1225.9 791.0 L1225.9 789.5 L1226.0 788.0 L1226.0 786.5 L1226.0 785.1 L1226.0 783.6 L1226.0 782.1 L1226.0 780.6 L1225.9 779.1 L1225.8 777.7 L1225.7 776.2 L1225.6 774.7 L1225.5 773.2 L1225.3 771.8 L1225.2 770.3 L1225.0 768.8 L1224.8 767.4 L1224.6 765.9 L1224.3 764.5 L1224.1 763.0 L1223.8 761.6 L1223.5 760.1 L1223.2 758.7 L1222.8 757.2 L1222.5 755.8 L1222.1 754.4 L1221.7 752.9 L1221.3 751.5 L1220.9 750.1 L1220.5 748.6 L1220.0 747.2 L1219.6 745.8 L1219.1 744.4 L1218.6 743.0 L1218.0 741.6 L1217.5 740.2 L1217.0 738.8 L1216.4 737.4 L1215.8 736.0 L1215.2 734.7 L1214.6 733.3 L1213.9 731.9 L1213.3 730.6 L1212.6 729.2 L1211.9 727.8 L1211.2 726.5 L1210.5 725.1 L1209.7 723.8 L1209.0 722.5 L1208.2 721.1 L1207.4 719.8 L1206.6 718.5 L1205.8 717.2 L1205.0 715.9 L1204.1 714.6 L1203.3 713.3 L1202.4 712.0 L1201.5 710.7 L1200.6 709.5 L1199.6 708.2 L1198.7 706.9 L1197.8 705.7 L1196.8 704.4 L1195.8 703.2 L1194.8 702.0 L1193.8 700.7 L1192.8 699.5 L1191.7 698.3 L1190.7 697.1 L1189.6 695.9 L1188.5 694.7 L1187.4 693.5 L1186.3 692.4 L1185.2 691.2 L1184.0 690.0 L1182.9 688.9 L1181.7 687.7 L1180.5 686.6 L1179.3 685.5 L1178.1 684.3 L1176.9 683.2 L1175.7 682.1 L1174.4 681.0 L1173.2 679.9 L1171.9 678.8 L1170.6 677.8 L1169.3 676.7 L1168.0 675.6 L1166.7 674.6 L1165.3 673.6 L1164.0 672.5 L1162.6 671.5 L1161.3 670.5 L1159.9 669.5 L1158.5 668.5 L1157.1 667.5 L1155.7 666.5 L1154.3 665.5 L1152.8 664.6 L1151.4 663.6 L1149.9 662.7 L1148.4 661.7 L1147.0 660.8 L1145.5 659.9 L1144.0 659.0 L1142.4 658.1 L1140.9 657.2 L1139.4 656.3 L1137.8 655.5 L1136.3 654.6 L1134.7 653.7 L1133.2 652.9 L1131.6 652.1 L1130.0 651.2 L1128.4 650.4 L1126.8 649.6 L1125.1 648.8 L1123.5 648.1 L1121.9 647.3 L1120.2 646.5 L1118.6 645.8 L1116.9 645.0 L1115.2 644.3 L1113.6 643.6 L1111.9 642.8 L1110.2 642.1 L1108.5 641.5 L1106.8 640.8 L1105.0 640.1 L1103.3 639.4 L1101.6 638.8 L1099.8 638.1 L1098.1 637.5 L1096.3 636.9 L1094.6 636.3 L1092.8 635.7 L1091.0 635.1 L1089.2 634.5 L1087.4 633.9 L1085.6 633.4 L1083.8 632.8 L1082.0 632.3 L1080.2 631.8 L1078.4 631.3 L1076.5 630.7 L1074.7 630.3 L1072.9 629.8 L1071.0 629.3 L1069.2 628.8 L1067.3 628.4 L1065.5 627.9 L1063.6 627.5 L1061.7 627.1 L1059.8 626.7 L1058.0 626.3 L1056.1 625.9 L1054.2 625.5 L1052.3 625.2 L1050.4 624.8 L1048.5 624.5 L1046.6 624.1 L1044.7 623.8 L1042.7 623.5 L1040.8 623.2 L1038.9 622.9 L1037.0 622.6 L1035.1 622.4 L1033.1 622.1 L1031.2 621.9 L1029.3 621.6 L1027.3 621.4 L1025.4 621.2 L1023.4 621.0 L1021.5 620.8 L1019.5 620.7 L1017.6 620.5 L1015.6 620.3 L1013.7 620.2 L1011.7 620.1 L1009.7 619.9 L1007.8 619.8 L1005.8 619.7 L1003.9 619.6 L1001.9 619.6 L999.9 619.5 L998.0 619.5 L996.0 619.4 L994.0 619.4 L992.1 619.4 L990.1 619.4 L988.1 619.4 L986.1 619.4 L984.2 619.4 L982.2 619.4 L980.2 619.5 L978.3 619.5 L976.3 619.6 L974.3 619.7 L972.4 619.8 L970.4 619.9 L968.4 620.0 L966.5 620.1 L964.5 620.3 L962.5 620.4 L960.6 620.6 L958.6 620.7 L956.6 620.9 L954.7 621.1 L952.7 621.3 L950.8 621.5 L948.8 621.8 L946.9 622.0 L944.9 622.2 L943.0 622.5 L941.0 622.8 L939.1 623.0 L937.2 623.3 L935.2 623.6 L933.3 624.0 L931.4 624.3 L929.4 624.6 L927.5 625.0 L925.6 625.3 L923.7 625.7 L921.8 626.1 L919.9 626.5 L918.0 626.9 L916.1 627.3 L914.2 627.7 L912.3 628.1 L910.4 628.6 L908.5 629.0 L906.6 629.5 L904.8 630.0 L902.9 630.5 L901.0 631.0 L899.2 631.5 L897.3 632.0 L895.5 632.5 L893.6 633.0 L891.8 633.6 L890.0 634.2 L888.2 634.7 L886.3 635.3 L884.5 635.9 L882.7 636.5 L880.9 637.1 L879.1 637.7 L877.3 638.4 L875.6 639.0 L873.8 639.7 L872.0 640.3 L870.3 641.0 L868.5 641.7 L866.8 642.4 L865.0 643.1 L863.3 643.8 L861.6 644.5 L859.9 645.3 L858.2 646.0 L856.5 646.8 L854.8 647.5 L853.1 648.3 L851.4 649.1 L849.8 649.9 L848.1 650.7 L846.5 651.5 L844.8 652.3 L843.2 653.1 L841.6 654.0 L839.9 654.8 L838.3 655.7 L836.8 656.6 L835.2 657.4 L833.6 658.3 L832.0 659.2 L830.5 660.1 L828.9 661.1 L827.4 662.0 L825.9 662.9 L824.4 663.9 L822.8 664.8 L821.4 665.8 L819.9 666.7 L818.4 667.7 L816.9 668.7 L815.5 669.7 L814.0 670.7 L812.6 671.7 L811.2 672.7 L809.8 673.8 L808.4 674.8 L807.0 675.8 L805.6 676.9 L804.3 678.0 L802.9 679.0 L801.6 680.1 L800.3 681.2 L799.0 682.3 L797.7 683.4 L796.4 684.5 L795.1 685.6 L793.8 686.7 L792.6 687.9 L791.3 689.0 L790.1 690.2 L788.9 691.3 L787.7 692.5 L786.5 693.6 L785.3 694.8 L784.2 696.0 L783.0 697.2 L781.9 698.4 L780.8 699.6 L779.7 700.8 L778.6 702.0 L777.5 703.3 L776.5 704.5 L775.4 705.7 L774.4 707.0 L773.4 708.2 L772.4 709.5 L771.4 710.8 L770.4 712.0 L769.4 713.3 L768.5 714.6 L767.5 715.9 L766.6 717.2 L765.7 718.5 L764.8 719.8 L764.0 721.1 L763.1 722.4 L762.3 723.7 L761.4 725.1 L760.6 726.4 L759.8 727.8 L759.1 729.1 L758.3 730.4 L757.6 731.8 L756.8 733.2 L756.1 734.5 L755.4 735.9 L754.7 737.3 L754.1 738.6 L753.4 740.0 L752.8 741.4 L752.2 742.8 L751.6 744.2 L751.0 745.6 L750.4 747.0 L749.9 748.4 L749.3 749.8 L748.8 751.2 L748.3 752.7 L747.8 754.1 L747.4 755.5 L746.9 756.9 L746.5 758.4 L746.1 759.8 L745.7 761.2 L745.3 762.7 L745.0 764.1 L744.6 765.6 L744.3 767.0 L744.0 768.5 L743.7 769.9 L743.4 771.4 L743.2 772.9 L742.9 774.3 L742.7 775.8 L742.5 777.2 L742.3 778.7 L742.2 780.2 L742.0 781.6 L741.9 783.1 Z" fill="#a6a6a6"/>
<g clip-path="url(#bc)">
<line x1="1174.6" y1="681.2" x2="1212.6" y2="729.3" stroke="url(#mg)" stroke-width="0.8"/>
<line x1="923.8" y1="625.7" x2="853.3" y2="648.2" stroke="url(#mg)" stroke-width="0.8"/>
<line x1="1151.9" y1="664.0" x2="1221.7" y2="752.7" stroke="url(#mg)" stroke-width="0.8"/>
<line x1="956.3" y1="620.9" x2="826.4" y2="662.6" stroke="url(#mg)" stroke-width="0.8"/>
<line x1="1134.8" y1="653.8" x2="1225.0" y2="769.0" stroke="url(#mg)" stroke-width="0.8"/>
<line x1="978.5" y1="619.5" x2="809.9" y2="673.7" stroke="url(#mg)" stroke-width="0.8"/>
<line x1="1106.6" y1="640.7" x2="1225.6" y2="794.4" stroke="url(#mg)" stroke-width="0.8"/>
<line x1="1012.3" y1="620.1" x2="787.6" y2="692.6" stroke="url(#mg)" stroke-width="0.8"/>
<line x1="1094.0" y1="636.1" x2="1224.2" y2="805.1" stroke="url(#mg)" stroke-width="0.8"/>
<line x1="1026.3" y1="621.3" x2="779.4" y2="701.2" stroke="url(#mg)" stroke-width="0.8"/>
<line x1="1082.2" y1="632.3" x2="1222.1" y2="815.0" stroke="url(#mg)" stroke-width="0.8"/>
<line x1="1039.1" y1="622.9" x2="772.5" y2="709.4" stroke="url(#mg)" stroke-width="0.8"/>
<line x1="1070.9" y1="629.3" x2="1219.4" y2="824.1" stroke="url(#mg)" stroke-width="0.8"/>
<line x1="1050.9" y1="624.9" x2="766.6" y2="717.3" stroke="url(#mg)" stroke-width="0.8"/>
<line x1="1049.5" y1="624.7" x2="1212.4" y2="840.7" stroke="url(#mg)" stroke-width="0.8"/>
<line x1="1072.2" y1="629.6" x2="757.2" y2="732.4" stroke="url(#mg)" stroke-width="0.8"/>
<line x1="1039.4" y1="623.0" x2="1208.3" y2="848.3" stroke="url(#mg)" stroke-width="0.8"/>
<line x1="1082.0" y1="632.3" x2="753.6" y2="739.7" stroke="url(#mg)" stroke-width="0.8"/>
<line x1="1029.5" y1="621.7" x2="1203.9" y2="855.6" stroke="url(#mg)" stroke-width="0.8"/>
<line x1="1091.2" y1="635.1" x2="750.5" y2="746.9" stroke="url(#mg)" stroke-width="0.8"/>
<line x1="1019.8" y1="620.7" x2="1199.2" y2="862.4" stroke="url(#mg)" stroke-width="0.8"/>
<line x1="1099.9" y1="638.2" x2="747.9" y2="753.9" stroke="url(#mg)" stroke-width="0.8"/>
<line x1="1001.2" y1="619.5" x2="1188.8" y2="875.3" stroke="url(#mg)" stroke-width="0.8"/>
<line x1="1116.2" y1="644.7" x2="744.2" y2="767.5" stroke="url(#mg)" stroke-width="0.8"/>
<line x1="992.2" y1="619.4" x2="1183.3" y2="881.3" stroke="url(#mg)" stroke-width="0.8"/>
<line x1="1123.7" y1="648.2" x2="742.9" y2="774.2" stroke="url(#mg)" stroke-width="0.8"/>
<line x1="983.3" y1="619.4" x2="1177.5" y2="887.0" stroke="url(#mg)" stroke-width="0.8"/>
<line x1="1131.0" y1="651.8" x2="742.1" y2="780.8" stroke="url(#mg)" stroke-width="0.8"/>
<line x1="974.6" y1="619.7" x2="1171.4" y2="892.5" stroke="url(#mg)" stroke-width="0.8"/>
<line x1="1137.9" y1="655.5" x2="741.6" y2="787.3" stroke="url(#mg)" stroke-width="0.8"/>
<line x1="957.7" y1="620.8" x2="1158.8" y2="902.7" stroke="url(#mg)" stroke-width="0.8"/>
<line x1="1150.9" y1="663.3" x2="741.7" y2="800.0" stroke="url(#mg)" stroke-width="0.8"/>
<line x1="949.4" y1="621.7" x2="1152.1" y2="907.4" stroke="url(#mg)" stroke-width="0.8"/>
<line x1="1156.9" y1="667.4" x2="742.3" y2="806.3" stroke="url(#mg)" stroke-width="0.8"/>
<line x1="941.3" y1="622.7" x2="1145.3" y2="912.0" stroke="url(#mg)" stroke-width="0.8"/>
<line x1="1162.7" y1="671.6" x2="743.2" y2="812.5" stroke="url(#mg)" stroke-width="0.8"/>
<line x1="933.3" y1="624.0" x2="1138.3" y2="916.3" stroke="url(#mg)" stroke-width="0.8"/>
<line x1="1168.3" y1="675.9" x2="744.4" y2="818.6" stroke="url(#mg)" stroke-width="0.8"/>
<line x1="917.6" y1="626.9" x2="1123.7" y2="924.4" stroke="url(#mg)" stroke-width="0.8"/>
<line x1="1178.6" y1="684.8" x2="747.7" y2="830.6" stroke="url(#mg)" stroke-width="0.8"/>
<line x1="909.9" y1="628.7" x2="1116.2" y2="928.1" stroke="url(#mg)" stroke-width="0.8"/>
<line x1="1183.4" y1="689.4" x2="749.8" y2="836.5" stroke="url(#mg)" stroke-width="0.8"/>
<line x1="902.3" y1="630.6" x2="1108.5" y2="931.6" stroke="url(#mg)" stroke-width="0.8"/>
<line x1="1188.0" y1="694.2" x2="752.2" y2="842.3" stroke="url(#mg)" stroke-width="0.8"/>
<line x1="894.8" y1="632.7" x2="1100.6" y2="934.9" stroke="url(#mg)" stroke-width="0.8"/>
<line x1="1192.3" y1="699.0" x2="755.0" y2="848.0" stroke="url(#mg)" stroke-width="0.8"/>
<line x1="880.1" y1="637.4" x2="1084.3" y2="940.8" stroke="url(#mg)" stroke-width="0.8"/>
<line x1="1200.2" y1="709.0" x2="761.3" y2="859.3" stroke="url(#mg)" stroke-width="0.8"/>
<line x1="873.0" y1="640.0" x2="1076.0" y2="943.5" stroke="url(#mg)" stroke-width="0.8"/>
<line x1="1203.8" y1="714.2" x2="764.9" y2="864.9" stroke="url(#mg)" stroke-width="0.8"/>
<line x1="865.9" y1="642.8" x2="1067.4" y2="946.0" stroke="url(#mg)" stroke-width="0.8"/>
<line x1="1207.2" y1="719.5" x2="768.9" y2="870.3" stroke="url(#mg)" stroke-width="0.8"/>
<line x1="858.9" y1="645.7" x2="1058.8" y2="948.2" stroke="url(#mg)" stroke-width="0.8"/>
<line x1="1210.3" y1="724.9" x2="773.1" y2="875.7" stroke="url(#mg)" stroke-width="0.8"/>
<line x1="845.2" y1="652.1" x2="1040.9" y2="952.1" stroke="url(#mg)" stroke-width="0.8"/>
<line x1="1215.8" y1="736.0" x2="782.6" y2="886.2" stroke="url(#mg)" stroke-width="0.8"/>
<line x1="838.5" y1="655.6" x2="1031.7" y2="953.6" stroke="url(#mg)" stroke-width="0.8"/>
<line x1="1218.1" y1="741.8" x2="787.8" y2="891.4" stroke="url(#mg)" stroke-width="0.8"/>
<line x1="831.9" y1="659.3" x2="1022.4" y2="955.0" stroke="url(#mg)" stroke-width="0.8"/>
<line x1="1220.2" y1="747.7" x2="793.4" y2="896.4" stroke="url(#mg)" stroke-width="0.8"/>
<line x1="825.4" y1="663.2" x2="1012.9" y2="956.1" stroke="url(#mg)" stroke-width="0.8"/>
<line x1="1222.0" y1="753.7" x2="799.3" y2="901.4" stroke="url(#mg)" stroke-width="0.8"/>
<line x1="812.7" y1="671.7" x2="993.4" y2="957.5" stroke="url(#mg)" stroke-width="0.8"/>
<line x1="1224.6" y1="766.2" x2="812.3" y2="911.0" stroke="url(#mg)" stroke-width="0.8"/>
<line x1="806.5" y1="676.2" x2="983.4" y2="957.8" stroke="url(#mg)" stroke-width="0.8"/>
<line x1="1225.4" y1="772.6" x2="819.3" y2="915.6" stroke="url(#mg)" stroke-width="0.8"/>
<line x1="800.4" y1="681.0" x2="973.3" y2="957.8" stroke="url(#mg)" stroke-width="0.8"/>
<line x1="1225.9" y1="779.2" x2="826.8" y2="920.1" stroke="url(#mg)" stroke-width="0.8"/>
<line x1="794.5" y1="686.1" x2="962.9" y2="957.5" stroke="url(#mg)" stroke-width="0.8"/>
<line x1="1226.0" y1="786.0" x2="834.8" y2="924.5" stroke="url(#mg)" stroke-width="0.8"/>
<line x1="783.1" y1="697.1" x2="941.5" y2="955.9" stroke="url(#mg)" stroke-width="0.8"/>
<line x1="1225.0" y1="800.2" x2="852.1" y2="932.8" stroke="url(#mg)" stroke-width="0.8"/>
<line x1="777.6" y1="703.2" x2="930.5" y2="954.5" stroke="url(#mg)" stroke-width="0.8"/>
<line x1="1223.8" y1="807.5" x2="861.6" y2="936.7" stroke="url(#mg)" stroke-width="0.8"/>
<line x1="772.3" y1="709.5" x2="919.3" y2="952.8" stroke="url(#mg)" stroke-width="0.8"/>
<line x1="1222.1" y1="815.2" x2="871.6" y2="940.5" stroke="url(#mg)" stroke-width="0.8"/>
<line x1="767.2" y1="716.3" x2="907.8" y2="950.5" stroke="url(#mg)" stroke-width="0.8"/>
<line x1="1219.7" y1="823.0" x2="882.4" y2="944.0" stroke="url(#mg)" stroke-width="0.8"/>
<line x1="757.8" y1="731.4" x2="883.9" y2="944.4" stroke="url(#mg)" stroke-width="0.8"/>
<line x1="1212.9" y1="839.6" x2="906.2" y2="950.2" stroke="url(#mg)" stroke-width="0.8"/>
<line x1="753.5" y1="739.9" x2="871.4" y2="940.4" stroke="url(#mg)" stroke-width="0.8"/>
<line x1="1208.2" y1="848.5" x2="919.6" y2="952.8" stroke="url(#mg)" stroke-width="0.8"/>
<line x1="749.6" y1="749.1" x2="858.4" y2="935.5" stroke="url(#mg)" stroke-width="0.8"/>
<line x1="1202.4" y1="857.8" x2="934.1" y2="955.0" stroke="url(#mg)" stroke-width="0.8"/>
<line x1="746.2" y1="759.4" x2="844.9" y2="929.6" stroke="url(#mg)" stroke-width="0.8"/>
<line x1="1195.2" y1="867.7" x2="950.2" y2="956.7" stroke="url(#mg)" stroke-width="0.8"/>
<line x1="741.8" y1="784.4" x2="815.4" y2="913.1" stroke="url(#mg)" stroke-width="0.8"/>
<line x1="1174.2" y1="890.0" x2="989.0" y2="957.7" stroke="url(#mg)" stroke-width="0.8"/>
<line x1="741.8" y1="801.1" x2="798.3" y2="900.6" stroke="url(#mg)" stroke-width="0.8"/>
<line x1="1157.7" y1="903.5" x2="1014.5" y2="955.9" stroke="url(#mg)" stroke-width="0.8"/>
<line x1="746.2" y1="825.8" x2="776.8" y2="880.0" stroke="url(#mg)" stroke-width="0.8"/>
<line x1="1129.7" y1="921.2" x2="1051.7" y2="949.9" stroke="url(#mg)" stroke-width="0.8"/>
<line x1="1120.0" y1="646.4" x2="1226.0" y2="782.6" stroke="url(#Mg)" stroke-width="0.9"/>
<line x1="996.6" y1="619.4" x2="797.5" y2="683.5" stroke="url(#Mg)" stroke-width="0.9"/>
<line x1="1060.0" y1="626.7" x2="1216.1" y2="832.6" stroke="url(#Mg)" stroke-width="0.9"/>
<line x1="1061.9" y1="627.1" x2="761.5" y2="724.9" stroke="url(#Mg)" stroke-width="0.9"/>
<line x1="1010.4" y1="620.0" x2="1194.1" y2="869.0" stroke="url(#Mg)" stroke-width="0.9"/>
<line x1="1108.2" y1="641.4" x2="745.8" y2="760.8" stroke="url(#Mg)" stroke-width="0.9"/>
<line x1="966.1" y1="620.1" x2="1165.2" y2="897.7" stroke="url(#Mg)" stroke-width="0.9"/>
<line x1="1144.5" y1="659.3" x2="741.5" y2="793.7" stroke="url(#Mg)" stroke-width="0.9"/>
<line x1="925.4" y1="625.4" x2="1131.1" y2="920.5" stroke="url(#Mg)" stroke-width="0.9"/>
<line x1="1173.6" y1="680.3" x2="745.9" y2="824.6" stroke="url(#Mg)" stroke-width="0.9"/>
<line x1="887.4" y1="635.0" x2="1092.5" y2="938.0" stroke="url(#Mg)" stroke-width="0.9"/>
<line x1="1196.4" y1="703.9" x2="758.0" y2="853.7" stroke="url(#Mg)" stroke-width="0.9"/>
<line x1="852.0" y1="648.8" x2="1049.9" y2="950.3" stroke="url(#Mg)" stroke-width="0.9"/>
<line x1="1213.2" y1="730.4" x2="777.7" y2="881.0" stroke="url(#Mg)" stroke-width="0.9"/>
<line x1="819.0" y1="667.3" x2="1003.3" y2="956.9" stroke="url(#Mg)" stroke-width="0.9"/>
<line x1="1223.4" y1="759.9" x2="805.6" y2="906.2" stroke="url(#Mg)" stroke-width="0.9"/>
<line x1="788.7" y1="691.5" x2="952.3" y2="956.9" stroke="url(#Mg)" stroke-width="0.9"/>
<line x1="1225.7" y1="793.0" x2="843.2" y2="928.7" stroke="url(#Mg)" stroke-width="0.9"/>
<line x1="762.4" y1="723.6" x2="896.0" y2="947.8" stroke="url(#Mg)" stroke-width="0.9"/>
<line x1="1216.7" y1="831.2" x2="893.9" y2="947.2" stroke="url(#Mg)" stroke-width="0.9"/>
<line x1="743.5" y1="770.9" x2="830.7" y2="922.3" stroke="url(#Mg)" stroke-width="0.9"/>
<line x1="1186.0" y1="878.3" x2="968.2" y2="957.7" stroke="url(#Mg)" stroke-width="0.9"/>
</g>
<path d="M741.8 784.6 L741.7 786.1 L741.6 787.5 L741.6 789.0 L741.5 790.5 L741.5 792.0 L741.5 793.4 L741.5 794.9 L741.6 796.4 L741.6 797.9 L741.7 799.4 L741.8 800.8 L741.9 802.3 L742.0 803.8 L742.2 805.3 L742.3 806.8 L742.5 808.2 L742.7 809.7 L743.0 811.2 L743.2 812.7 L743.5 814.1 L743.8 815.6 L744.1 817.1 L744.4 818.6 L744.7 820.0 L745.1 821.5 L745.4 823.0 L745.8 824.4 L746.2 825.9 L746.7 827.3 L747.1 828.8 L747.6 830.3 L748.1 831.7 L748.6 833.2 L749.1 834.6 L749.7 836.1 L750.2 837.5 L750.8 838.9 L751.4 840.4 L752.0 841.8 L752.7 843.2 L753.3 844.7 L754.0 846.1 L754.7 847.5 L755.4 848.9 L756.2 850.3 L756.9 851.8 L757.7 853.2 L758.5 854.6 L759.3 855.9 L760.1 857.3 L760.9 858.7 L761.8 860.1 L762.7 861.5 L763.6 862.8 L764.5 864.2 L765.4 865.6 L766.4 866.9 L767.4 868.3 L768.4 869.6 L769.4 871.0 L770.4 872.3 L771.4 873.6 L772.5 874.9 L773.6 876.2 L774.7 877.5 L775.8 878.8 L776.9 880.1 L778.1 881.4 L779.2 882.7 L780.4 884.0 L781.6 885.2 L782.9 886.5 L784.1 887.7 L785.4 889.0 L786.6 890.2 L787.9 891.5 L789.2 892.7 L790.5 893.9 L791.9 895.1 L793.2 896.3 L794.6 897.5 L796.0 898.6 L797.4 899.8 L798.8 901.0 L800.3 902.1 L801.7 903.3 L803.2 904.4 L804.7 905.5 L806.2 906.6 L807.7 907.7 L809.2 908.8 L810.8 909.9 L812.3 911.0 L813.9 912.1 L815.5 913.1 L817.1 914.2 L818.7 915.2 L820.4 916.2 L822.0 917.3 L823.7 918.3 L825.4 919.3 L827.1 920.2 L828.8 921.2 L830.5 922.2 L832.2 923.1 L834.0 924.1 L835.7 925.0 L837.5 925.9 L839.3 926.8 L841.1 927.7 L842.9 928.6 L844.7 929.5 L846.6 930.3 L848.4 931.2 L850.3 932.0 L852.2 932.9 L854.1 933.7 L856.0 934.5 L857.9 935.3 L859.8 936.0 L861.7 936.8 L863.7 937.5 L865.6 938.3 L867.6 939.0 L869.6 939.7 L871.6 940.4 L873.6 941.1 L875.6 941.8 L877.6 942.5 L879.6 943.1 L881.7 943.7 L883.7 944.4 L885.8 945.0 L887.8 945.6 L889.9 946.1 L892.0 946.7 L894.1 947.3 L896.2 947.8 L898.3 948.3 L900.4 948.9 L902.5 949.4 L904.7 949.8 L906.8 950.3 L909.0 950.8 L911.1 951.2 L913.3 951.6 L915.4 952.1 L917.6 952.5 L919.8 952.9 L922.0 953.2 L924.2 953.6 L926.4 953.9 L928.6 954.3 L930.8 954.6 L933.0 954.9 L935.2 955.2 L937.4 955.4 L939.6 955.7 L941.9 955.9 L944.1 956.2 L946.3 956.4 L948.6 956.6 L950.8 956.8 L953.1 956.9 L955.3 957.1 L957.6 957.2 L959.8 957.4 L962.1 957.5 L964.3 957.6 L966.6 957.7 L968.9 957.7 L971.1 957.8 L973.4 957.8 L975.7 957.8 L977.9 957.8 L980.2 957.8 L982.5 957.8 L984.7 957.8 L987.0 957.7 L989.3 957.7 L991.5 957.6 L993.8 957.5 L996.1 957.4 L998.3 957.2 L1000.6 957.1 L1002.9 956.9 L1005.1 956.8 L1007.4 956.6 L1009.6 956.4 L1011.9 956.2 L1014.1 955.9 L1016.4 955.7 L1018.6 955.4 L1020.9 955.2 L1023.1 954.9 L1025.4 954.6 L1027.6 954.3 L1029.8 953.9 L1032.0 953.6 L1034.2 953.2 L1036.5 952.9 L1038.7 952.5 L1040.9 952.1 L1043.1 951.7 L1045.3 951.2 L1047.5 950.8 L1049.6 950.3 L1051.8 949.8 L1054.0 949.4 L1056.1 948.9 L1058.3 948.3 L1060.4 947.8 L1062.6 947.3 L1064.7 946.7 L1066.9 946.1 L1069.0 945.6 L1071.1 945.0 L1073.2 944.4 L1075.3 943.7 L1077.4 943.1 L1079.4 942.4 L1081.5 941.8 L1083.6 941.1 L1085.6 940.4 L1087.7 939.7 L1089.7 939.0 L1091.7 938.3 L1093.7 937.5 L1095.7 936.8 L1097.7 936.0 L1099.7 935.2 L1101.7 934.4 L1103.6 933.6 L1105.6 932.8 L1107.5 932.0 L1109.5 931.1 L1111.4 930.3 L1113.3 929.4 L1115.2 928.5 L1117.1 927.7 L1118.9 926.8 L1120.8 925.8 L1122.6 924.9 L1124.5 924.0 L1126.3 923.0 L1128.1 922.1 L1129.9 921.1 L1131.7 920.1 L1133.4 919.1 L1135.2 918.1 L1136.9 917.1 L1138.6 916.1 L1140.4 915.1 L1142.1 914.0 L1143.7 913.0 L1145.4 911.9 L1147.1 910.8 L1148.7 909.8 L1150.3 908.7 L1152.0 907.6 L1153.5 906.5 L1155.1 905.3 L1156.7 904.2 L1158.2 903.1 L1159.8 901.9 L1161.3 900.8 L1162.8 899.6 L1164.3 898.4 L1165.8 897.2 L1167.2 896.0 L1168.7 894.8 L1170.1 893.6 L1171.5 892.4 L1172.9 891.2 L1174.3 889.9 L1175.6 888.7 L1177.0 887.4 L1178.3 886.2 L1179.6 884.9 L1180.9 883.7 L1182.2 882.4 L1183.4 881.1 L1184.7 879.8 L1185.9 878.5 L1187.1 877.2 L1188.3 875.9 L1189.5 874.5 L1190.6 873.2 L1191.8 871.9 L1192.9 870.5 L1194.0 869.2 L1195.1 867.8 L1196.1 866.5 L1197.2 865.1 L1198.2 863.8 L1199.2 862.4 L1200.2 861.0 L1201.2 859.6 L1202.1 858.2 L1203.1 856.8 L1204.0 855.4 L1204.9 854.0 L1205.8 852.6 L1206.6 851.2 L1207.5 849.8 L1208.3 848.4 L1209.1 846.9 L1209.9 845.5 L1210.7 844.1 L1211.4 842.6 L1212.2 841.2 L1212.9 839.8 L1213.6 838.3 L1214.3 836.9 L1214.9 835.4 L1215.6 833.9 L1216.2 832.5 L1216.8 831.0 L1217.4 829.6 L1217.9 828.1 L1218.5 826.6 L1219.0 825.2 L1219.5 823.7 L1220.0 822.2 L1220.5 820.7 L1220.9 819.3 L1221.3 817.8 L1221.8 816.3 L1222.1 814.8 L1222.5 813.3 L1222.9 811.8 L1223.2 810.4 L1223.5 808.9 L1223.8 807.4 L1224.1 805.9 L1224.4 804.4 L1224.6 802.9 L1224.8 801.4 L1225.0 799.9 L1225.2 798.4 L1225.4 797.0 L1225.5 795.5 L1225.7 794.0 L1225.8 792.5 L1225.9 791.0 L1225.9 789.5 L1226.0 788.0 L1226.0 786.5 L1226.0 785.1 L1226.0 783.6 L1226.0 782.1 L1226.0 780.6 L1225.9 779.1 L1225.8 777.7 L1225.7 776.2 L1225.6 774.7 L1225.5 773.2 L1225.3 771.8 L1225.2 770.3 L1225.0 768.8 L1224.8 767.4 L1224.6 765.9 L1224.3 764.5 L1224.1 763.0 L1223.8 761.6 L1223.5 760.1 L1223.2 758.7 L1222.8 757.2 L1222.5 755.8 L1222.1 754.4 L1221.7 752.9 L1221.3 751.5 L1220.9 750.1 L1220.5 748.6 L1220.0 747.2 L1219.6 745.8 L1219.1 744.4 L1218.6 743.0 L1218.0 741.6 L1217.5 740.2 L1217.0 738.8 L1216.4 737.4 L1215.8 736.0 L1215.2 734.7 L1214.6 733.3 L1213.9 731.9 L1213.3 730.6 L1212.6 729.2 L1211.9 727.8 L1211.2 726.5 L1210.5 725.1 L1209.7 723.8 L1209.0 722.5 L1208.2 721.1 L1207.4 719.8 L1206.6 718.5 L1205.8 717.2 L1205.0 715.9 L1204.1 714.6 L1203.3 713.3 L1202.4 712.0 L1201.5 710.7 L1200.6 709.5 L1199.6 708.2 L1198.7 706.9 L1197.8 705.7 L1196.8 704.4 L1195.8 703.2 L1194.8 702.0 L1193.8 700.7 L1192.8 699.5 L1191.7 698.3 L1190.7 697.1 L1189.6 695.9 L1188.5 694.7 L1187.4 693.5 L1186.3 692.4 L1185.2 691.2 L1184.0 690.0 L1182.9 688.9 L1181.7 687.7 L1180.5 686.6 L1179.3 685.5 L1178.1 684.3 L1176.9 683.2 L1175.7 682.1 L1174.4 681.0 L1173.2 679.9 L1171.9 678.8 L1170.6 677.8 L1169.3 676.7 L1168.0 675.6 L1166.7 674.6 L1165.3 673.6 L1164.0 672.5 L1162.6 671.5 L1161.3 670.5 L1159.9 669.5 L1158.5 668.5 L1157.1 667.5 L1155.7 666.5 L1154.3 665.5 L1152.8 664.6 L1151.4 663.6 L1149.9 662.7 L1148.4 661.7 L1147.0 660.8 L1145.5 659.9 L1144.0 659.0 L1142.4 658.1 L1140.9 657.2 L1139.4 656.3 L1137.8 655.5 L1136.3 654.6 L1134.7 653.7 L1133.2 652.9 L1131.6 652.1 L1130.0 651.2 L1128.4 650.4 L1126.8 649.6 L1125.1 648.8 L1123.5 648.1 L1121.9 647.3 L1120.2 646.5 L1118.6 645.8 L1116.9 645.0 L1115.2 644.3 L1113.6 643.6 L1111.9 642.8 L1110.2 642.1 L1108.5 641.5 L1106.8 640.8 L1105.0 640.1 L1103.3 639.4 L1101.6 638.8 L1099.8 638.1 L1098.1 637.5 L1096.3 636.9 L1094.6 636.3 L1092.8 635.7 L1091.0 635.1 L1089.2 634.5 L1087.4 633.9 L1085.6 633.4 L1083.8 632.8 L1082.0 632.3 L1080.2 631.8 L1078.4 631.3 L1076.5 630.7 L1074.7 630.3 L1072.9 629.8 L1071.0 629.3 L1069.2 628.8 L1067.3 628.4 L1065.5 627.9 L1063.6 627.5 L1061.7 627.1 L1059.8 626.7 L1058.0 626.3 L1056.1 625.9 L1054.2 625.5 L1052.3 625.2 L1050.4 624.8 L1048.5 624.5 L1046.6 624.1 L1044.7 623.8 L1042.7 623.5 L1040.8 623.2 L1038.9 622.9 L1037.0 622.6 L1035.1 622.4 L1033.1 622.1 L1031.2 621.9 L1029.3 621.6 L1027.3 621.4 L1025.4 621.2 L1023.4 621.0 L1021.5 620.8 L1019.5 620.7 L1017.6 620.5 L1015.6 620.3 L1013.7 620.2 L1011.7 620.1 L1009.7 619.9 L1007.8 619.8 L1005.8 619.7 L1003.9 619.6 L1001.9 619.6 L999.9 619.5 L998.0 619.5 L996.0 619.4 L994.0 619.4 L992.1 619.4 L990.1 619.4 L988.1 619.4 L986.1 619.4 L984.2 619.4 L982.2 619.4 L980.2 619.5 L978.3 619.5 L976.3 619.6 L974.3 619.7 L972.4 619.8 L970.4 619.9 L968.4 620.0 L966.5 620.1 L964.5 620.3 L962.5 620.4 L960.6 620.6 L958.6 620.7 L956.6 620.9 L954.7 621.1 L952.7 621.3 L950.8 621.5 L948.8 621.8 L946.9 622.0 L944.9 622.2 L943.0 622.5 L941.0 622.8 L939.1 623.0 L937.2 623.3 L935.2 623.6 L933.3 624.0 L931.4 624.3 L929.4 624.6 L927.5 625.0 L925.6 625.3 L923.7 625.7 L921.8 626.1 L919.9 626.5 L918.0 626.9 L916.1 627.3 L914.2 627.7 L912.3 628.1 L910.4 628.6 L908.5 629.0 L906.6 629.5 L904.8 630.0 L902.9 630.5 L901.0 631.0 L899.2 631.5 L897.3 632.0 L895.5 632.5 L893.6 633.0 L891.8 633.6 L890.0 634.2 L888.2 634.7 L886.3 635.3 L884.5 635.9 L882.7 636.5 L880.9 637.1 L879.1 637.7 L877.3 638.4 L875.6 639.0 L873.8 639.7 L872.0 640.3 L870.3 641.0 L868.5 641.7 L866.8 642.4 L865.0 643.1 L863.3 643.8 L861.6 644.5 L859.9 645.3 L858.2 646.0 L856.5 646.8 L854.8 647.5 L853.1 648.3 L851.4 649.1 L849.8 649.9 L848.1 650.7 L846.5 651.5 L844.8 652.3 L843.2 653.1 L841.6 654.0 L839.9 654.8 L838.3 655.7 L836.8 656.6 L835.2 657.4 L833.6 658.3 L832.0 659.2 L830.5 660.1 L828.9 661.1 L827.4 662.0 L825.9 662.9 L824.4 663.9 L822.8 664.8 L821.4 665.8 L819.9 666.7 L818.4 667.7 L816.9 668.7 L815.5 669.7 L814.0 670.7 L812.6 671.7 L811.2 672.7 L809.8 673.8 L808.4 674.8 L807.0 675.8 L805.6 676.9 L804.3 678.0 L802.9 679.0 L801.6 680.1 L800.3 681.2 L799.0 682.3 L797.7 683.4 L796.4 684.5 L795.1 685.6 L793.8 686.7 L792.6 687.9 L791.3 689.0 L790.1 690.2 L788.9 691.3 L787.7 692.5 L786.5 693.6 L785.3 694.8 L784.2 696.0 L783.0 697.2 L781.9 698.4 L780.8 699.6 L779.7 700.8 L778.6 702.0 L777.5 703.3 L776.5 704.5 L775.4 705.7 L774.4 707.0 L773.4 708.2 L772.4 709.5 L771.4 710.8 L770.4 712.0 L769.4 713.3 L768.5 714.6 L767.5 715.9 L766.6 717.2 L765.7 718.5 L764.8 719.8 L764.0 721.1 L763.1 722.4 L762.3 723.7 L761.4 725.1 L760.6 726.4 L759.8 727.8 L759.1 729.1 L758.3 730.4 L757.6 731.8 L756.8 733.2 L756.1 734.5 L755.4 735.9 L754.7 737.3 L754.1 738.6 L753.4 740.0 L752.8 741.4 L752.2 742.8 L751.6 744.2 L751.0 745.6 L750.4 747.0 L749.9 748.4 L749.3 749.8 L748.8 751.2 L748.3 752.7 L747.8 754.1 L747.4 755.5 L746.9 756.9 L746.5 758.4 L746.1 759.8 L745.7 761.2 L745.3 762.7 L745.0 764.1 L744.6 765.6 L744.3 767.0 L744.0 768.5 L743.7 769.9 L743.4 771.4 L743.2 772.9 L742.9 774.3 L742.7 775.8 L742.5 777.2 L742.3 778.7 L742.2 780.2 L742.0 781.6 L741.9 783.1 Z" fill="none" stroke="#555" stroke-width="1.3"/>
<line x1="894.9" y1="947.5" x2="844.9" y2="180.9" stroke="#c4c4c4"/>
<line x1="1216.4" y1="831.9" x2="1250.1" y2="75.5" stroke="#c4c4c4"/>
<path d="M946 73.2 C950 72.8 953 73.5 956 76 L1002 120.8 L1020 140.5 C1032 165 1046 215 1055 272 C1059 300 1061 330 1062 360 L1063 460 L1062.6 557 L1062 640 L984 800.8 L932 810 L907 788 L905 756 C899 700 895 640 893 560 L893.6 460 C895 380 900 320 906 260 C912 210 918 180 922 160 C930 120 936 95 944 78 Z" fill="#12b88e"/>
<clipPath id="ctall"><path d="M946 73.2 C950 72.8 953 73.5 956 76 L1002 120.8 L1020 140.5 C1032 165 1046 215 1055 272 C1059 300 1061 330 1062 360 L1063 460 L1062.6 557 L1062 640 L984 800.8 L932 810 L907 788 L905 756 C899 700 895 640 893 560 L893.6 460 C895 380 900 320 906 260 C912 210 918 180 922 160 C930 120 936 95 944 78 Z"/></clipPath>
<g clip-path="url(#ctall)" fill="none" stroke="rgba(0,70,50,0.05)" stroke-width="1.5"><ellipse cx="940" cy="642" rx="3.0" ry="7.2"/><ellipse cx="940" cy="642" rx="6.5" ry="15.6"/><ellipse cx="940" cy="642" rx="10.0" ry="24.0"/><ellipse cx="940" cy="642" rx="13.5" ry="32.4"/><ellipse cx="940" cy="642" rx="17.0" ry="40.8"/><ellipse cx="940" cy="642" rx="20.5" ry="49.2"/><ellipse cx="940" cy="642" rx="24.0" ry="57.6"/><ellipse cx="940" cy="642" rx="27.5" ry="66.0"/><ellipse cx="940" cy="642" rx="31.0" ry="74.4"/><ellipse cx="940" cy="642" rx="34.5" ry="82.8"/><ellipse cx="940" cy="642" rx="38.0" ry="91.2"/><ellipse cx="940" cy="642" rx="41.5" ry="99.6"/><ellipse cx="940" cy="642" rx="45.0" ry="108.0"/></g>
<path d="M922.5 560 L922 790" stroke="rgba(0,80,60,0.08)" stroke-width="2"/>
<path d="M935 757 C945 772 962 780 984 781" fill="none" stroke="rgba(60,230,180,0.35)" stroke-width="1.3"/>
<path d="M946 73.2 C950 72.8 953 73.5 956 76 L1002 120.8 L1020 140.5 L1014 146 L1000 134 L950 90 L943.5 81 Z" fill="#12c286"/>
<path d="M1014 146 L1020 140.5 C1032 165 1046 215 1055 272 C1059 300 1061 330 1062 360 L1063 460 L1062.6 557 L1010 557 L1010 300 Z" fill="#0caa86"/>
<path d="M992.5 350 L1001 368 L1000.5 552 L992.5 558 Z" fill="#0ca884"/>
<path d="M1061.5 526.5 L1025.5 555.8" stroke="#22d0a0" stroke-width="2.5"/>
<path d="M926.5 569 C940 577 960 580 990 579" fill="none" stroke="#1ccc9a" stroke-width="1.5"/>
<path d="M905 758 L907 788 L932 810 L984 800.8" fill="none" stroke="#1f8fe0" stroke-width="3"/>
<path d="M958 601.5 C958.5 592 960 588 962.3 584.3 C964 580 966 578 969.7 575.7 C975 571 980 568 986.9 564.6 C995 560 1003 557.5 1011.5 556 C1020 554.5 1028 553.5 1036 553.5 C1045 553.8 1052 555 1060.7 557.2 C1070 560 1078 563 1085.3 567 L1103.2 578.1 L1110 592.9 L1116.7 608.9 L1114.9 638.4 L1100.8 740 L1084 856.8 L1083.2 861.6 L1072 871.2 L1003.2 892 L998.4 882.4 L979.2 740 L959.8 620 Z" fill="#12b88e"/>
<clipPath id="ccup"><path d="M958 601.5 C958.5 592 960 588 962.3 584.3 C964 580 966 578 969.7 575.7 C975 571 980 568 986.9 564.6 C995 560 1003 557.5 1011.5 556 C1020 554.5 1028 553.5 1036 553.5 C1045 553.8 1052 555 1060.7 557.2 C1070 560 1078 563 1085.3 567 L1103.2 578.1 L1110 592.9 L1116.7 608.9 L1114.9 638.4 L1100.8 740 L1084 856.8 L1083.2 861.6 L1072 871.2 L1003.2 892 L998.4 882.4 L979.2 740 L959.8 620 Z"/></clipPath>
<g clip-path="url(#ccup)" fill="none" stroke="rgba(0,70,50,0.05)" stroke-width="1.5"><ellipse cx="1076" cy="715" rx="3.0" ry="6.0"/><ellipse cx="1076" cy="715" rx="6.5" ry="13.0"/><ellipse cx="1076" cy="715" rx="10.0" ry="20.0"/><ellipse cx="1076" cy="715" rx="13.5" ry="27.0"/><ellipse cx="1076" cy="715" rx="17.0" ry="34.0"/><ellipse cx="1076" cy="715" rx="20.5" ry="41.0"/><ellipse cx="1076" cy="715" rx="24.0" ry="48.0"/><ellipse cx="1076" cy="715" rx="27.5" ry="55.0"/><ellipse cx="1076" cy="715" rx="31.0" ry="62.0"/><ellipse cx="1076" cy="715" rx="34.5" ry="69.0"/><ellipse cx="1076" cy="715" rx="38.0" ry="76.0"/><ellipse cx="1076" cy="715" rx="41.5" ry="83.0"/></g>
<g clip-path="url(#ccup)" fill="none" stroke="rgba(0,70,50,0.04)" stroke-width="1.5"><ellipse cx="1017" cy="727" rx="3.0" ry="6.0"/><ellipse cx="1017" cy="727" rx="6.5" ry="13.0"/><ellipse cx="1017" cy="727" rx="10.0" ry="20.0"/><ellipse cx="1017" cy="727" rx="13.5" ry="27.0"/><ellipse cx="1017" cy="727" rx="17.0" ry="34.0"/><ellipse cx="1017" cy="727" rx="20.5" ry="41.0"/><ellipse cx="1017" cy="727" rx="24.0" ry="48.0"/><ellipse cx="1017" cy="727" rx="27.5" ry="55.0"/></g>
<path d="M958 601.5 C958.5 592 960 588 962.3 584.3 C964 580 966 578 969.7 575.7 C975 571 980 568 986.9 564.6 C995 560 1003 557.5 1011.5 556 C1020 554.5 1028 553.5 1036 553.5 C1045 553.8 1052 555 1060.7 557.2 C1070 560 1078 563 1085.3 567 L1103.2 578.1 L1110 592.9 L1116.7 608.9 L1073 624.9 L1036 634.7 L1011.5 642.1 L990.6 648.3 L971 633.5 L959.8 620 Z" fill="#10b48c"/>
<path d="M958 601.5 C958.5 592 960 588 962.3 584.3 C964 580 966 578 969.7 575.7 C975 571 980 568 986.9 564.6 L989 600 L990.6 648.3 L971 633.5 L959.8 620 Z" fill="#0fae8a"/>
<path d="M1116.7 608.9 L1073 624.9 L1036 634.7 L1011.5 642.1 L990.6 648.3" fill="none" stroke="#24cc9c" stroke-width="1.6"/>
<path d="M1022.4 799.2 L1070.4 783.2 L1072 871.2 L1020.8 887.2 Z" fill="#10b28a"/>
<path d="M1070.4 783.2 L1098 760 L1084 856.8 L1072 871.2 Z" fill="#16bf92"/>
<path d="M1005 766 C1030 772 1070 762 1100 730" fill="none" stroke="#22cc9a" stroke-width="2"/>
<path d="M998.4 882.4 L1003.2 892 L1072 871.2 L1083.2 861.6 L1084 852" fill="none" stroke="#1f8fe0" stroke-width="3"/>
<defs><pattern id="tx" patternUnits="userSpaceOnUse" width="3" height="3" patternTransform="rotate(35)"><rect width="3" height="1.2" fill="rgba(255,255,255,0.07)"/><rect y="1.6" width="3" height="0.8" fill="rgba(0,60,40,0.06)"/></pattern></defs>
<path d="M946 73.2 C950 72.8 953 73.5 956 76 L1002 120.8 L1020 140.5 C1032 165 1046 215 1055 272 C1059 300 1061 330 1062 360 L1063 460 L1062.6 557 L1062 640 L984 800.8 L932 810 L907 788 L905 756 C899 700 895 640 893 560 L893.6 460 C895 380 900 320 906 260 C912 210 918 180 922 160 C930 120 936 95 944 78 Z" fill="url(#tx)"/>
<path d="M958 601.5 C958.5 592 960 588 962.3 584.3 C964 580 966 578 969.7 575.7 C975 571 980 568 986.9 564.6 C995 560 1003 557.5 1011.5 556 C1020 554.5 1028 553.5 1036 553.5 C1045 553.8 1052 555 1060.7 557.2 C1070 560 1078 563 1085.3 567 L1103.2 578.1 L1110 592.9 L1116.7 608.9 L1114.9 638.4 L1100.8 740 L1084 856.8 L1083.2 861.6 L1072 871.2 L1003.2 892 L998.4 882.4 L979.2 740 L959.8 620 Z" fill="url(#tx)"/>
<path d="M658.5 40.6 L658.3 41.9 L658.2 43.2 L658.1 44.4 L657.9 45.7 L657.9 47.0 L657.8 48.2 L657.8 49.5 L657.7 50.8 L657.7 52.1 L657.8 53.3 L657.8 54.6 L657.9 55.9 L658.0 57.1 L658.1 58.4 L658.3 59.7 L658.4 61.0 L658.6 62.2 L658.8 63.5 L659.1 64.8 L659.4 66.0 L659.6 67.3 L659.9 68.6 L660.3 69.8 L660.6 71.1 L661.0 72.4 L661.4 73.6 L661.9 74.9 L662.3 76.2 L662.8 77.4 L663.3 78.7 L663.8 79.9 L664.4 81.2 L664.9 82.4 L665.5 83.7 L666.1 84.9 L666.8 86.2 L667.5 87.4 L668.1 88.7 L668.9 89.9 L669.6 91.1 L670.4 92.4 L671.1 93.6 L672.0 94.8 L672.8 96.0 L673.6 97.3 L674.5 98.5 L675.4 99.7 L676.4 100.9 L677.3 102.1 L678.3 103.3 L679.3 104.5 L680.3 105.7 L681.4 106.9 L682.4 108.0 L683.5 109.2 L684.6 110.4 L685.8 111.6 L686.9 112.7 L688.1 113.9 L689.3 115.0 L690.6 116.2 L691.8 117.3 L693.1 118.5 L694.4 119.6 L695.7 120.7 L697.1 121.9 L698.5 123.0 L699.9 124.1 L701.3 125.2 L702.7 126.3 L704.2 127.4 L705.7 128.5 L707.2 129.6 L708.7 130.6 L710.2 131.7 L711.8 132.8 L713.4 133.8 L715.0 134.9 L716.7 135.9 L718.3 136.9 L720.0 137.9 L721.7 139.0 L723.4 140.0 L725.2 141.0 L726.9 142.0 L728.7 143.0 L730.5 143.9 L732.4 144.9 L734.2 145.9 L736.1 146.8 L738.0 147.8 L739.9 148.7 L741.8 149.6 L743.8 150.6 L745.7 151.5 L747.7 152.4 L749.7 153.3 L751.8 154.1 L753.8 155.0 L755.9 155.9 L758.0 156.7 L760.1 157.6 L762.2 158.4 L764.3 159.3 L766.5 160.1 L768.7 160.9 L770.9 161.7 L773.1 162.5 L775.3 163.3 L777.5 164.0 L779.8 164.8 L782.1 165.5 L784.4 166.3 L786.7 167.0 L789.0 167.7 L791.4 168.4 L793.7 169.1 L796.1 169.8 L798.5 170.5 L800.9 171.1 L803.3 171.8 L805.8 172.4 L808.2 173.1 L810.7 173.7 L813.2 174.3 L815.6 174.9 L818.2 175.5 L820.7 176.1 L823.2 176.6 L825.8 177.2 L828.3 177.7 L830.9 178.2 L833.5 178.7 L836.1 179.2 L838.7 179.7 L841.3 180.2 L843.9 180.7 L846.6 181.1 L849.2 181.6 L851.9 182.0 L854.6 182.4 L857.3 182.8 L860.0 183.2 L862.7 183.6 L865.4 184.0 L868.1 184.3 L870.8 184.7 L873.6 185.0 L876.3 185.3 L879.1 185.6 L881.8 185.9 L884.6 186.2 L887.4 186.5 L890.2 186.7 L893.0 187.0 L895.8 187.2 L898.6 187.4 L901.4 187.6 L904.2 187.8 L907.0 188.0 L909.9 188.1 L912.7 188.3 L915.5 188.4 L918.4 188.5 L921.2 188.7 L924.1 188.8 L926.9 188.8 L929.8 188.9 L932.7 189.0 L935.5 189.0 L938.4 189.0 L941.2 189.1 L944.1 189.1 L947.0 189.1 L949.9 189.0 L952.7 189.0 L955.6 189.0 L958.5 188.9 L961.4 188.8 L964.2 188.7 L967.1 188.6 L970.0 188.5 L972.9 188.4 L975.7 188.3 L978.6 188.1 L981.5 187.9 L984.3 187.8 L987.2 187.6 L990.0 187.4 L992.9 187.1 L995.8 186.9 L998.6 186.7 L1001.5 186.4 L1004.3 186.1 L1007.1 185.9 L1010.0 185.6 L1012.8 185.3 L1015.6 184.9 L1018.4 184.6 L1021.3 184.3 L1024.1 183.9 L1026.9 183.5 L1029.7 183.1 L1032.4 182.7 L1035.2 182.3 L1038.0 181.9 L1040.8 181.5 L1043.5 181.0 L1046.3 180.6 L1049.0 180.1 L1051.7 179.6 L1054.5 179.1 L1057.2 178.6 L1059.9 178.1 L1062.6 177.6 L1065.3 177.0 L1067.9 176.5 L1070.6 175.9 L1073.3 175.3 L1075.9 174.7 L1078.5 174.1 L1081.1 173.5 L1083.8 172.9 L1086.4 172.2 L1088.9 171.6 L1091.5 170.9 L1094.1 170.3 L1096.6 169.6 L1099.1 168.9 L1101.7 168.2 L1104.2 167.5 L1106.7 166.7 L1109.1 166.0 L1111.6 165.3 L1114.1 164.5 L1116.5 163.7 L1118.9 163.0 L1121.3 162.2 L1123.7 161.4 L1126.1 160.6 L1128.4 159.7 L1130.8 158.9 L1133.1 158.1 L1135.4 157.2 L1137.7 156.4 L1140.0 155.5 L1142.2 154.6 L1144.5 153.7 L1146.7 152.8 L1148.9 151.9 L1151.1 151.0 L1153.3 150.1 L1155.4 149.2 L1157.6 148.2 L1159.7 147.3 L1161.8 146.3 L1163.9 145.4 L1165.9 144.4 L1168.0 143.4 L1170.0 142.4 L1172.0 141.4 L1174.0 140.4 L1176.0 139.4 L1177.9 138.4 L1179.8 137.3 L1181.7 136.3 L1183.6 135.2 L1185.5 134.2 L1187.3 133.1 L1189.2 132.1 L1191.0 131.0 L1192.7 129.9 L1194.5 128.8 L1196.3 127.7 L1198.0 126.6 L1199.7 125.5 L1201.3 124.4 L1203.0 123.3 L1204.6 122.2 L1206.2 121.0 L1207.8 119.9 L1209.4 118.8 L1210.9 117.6 L1212.5 116.4 L1214.0 115.3 L1215.4 114.1 L1216.9 113.0 L1218.3 111.8 L1219.7 110.6 L1221.1 109.4 L1222.5 108.2 L1223.8 107.0 L1225.2 105.8 L1226.5 104.6 L1227.7 103.4 L1229.0 102.2 L1230.2 101.0 L1231.4 99.8 L1232.6 98.5 L1233.7 97.3 L1234.9 96.1 L1236.0 94.9 L1237.1 93.6 L1238.1 92.4 L1239.2 91.1 L1240.2 89.9 L1241.2 88.6 L1242.1 87.4 L1243.1 86.1 L1244.0 84.9 L1244.9 83.6 L1245.8 82.3 L1246.6 81.1 L1247.4 79.8 L1248.2 78.5 L1249.0 77.3 L1249.8 76.0 L1250.5 74.7 L1251.2 73.4 L1251.9 72.2 L1252.5 70.9 L1253.2 69.6 L1253.8 68.3 L1254.4 67.0 L1254.9 65.8 L1255.5 64.5 L1256.0 63.2 L1256.5 61.9 L1256.9 60.6 L1257.4 59.3 L1257.8 58.0 L1258.2 56.8 L1258.6 55.5 L1258.9 54.2 L1259.2 52.9 L1259.5 51.6 L1259.8 50.3 L1260.1 49.0 L1260.3 47.7 L1260.5 46.5 L1260.7 45.2 L1260.8 43.9 L1261.0 42.6 L1261.1 41.3 L1261.1 40.1 L1261.2 38.8 L1261.3 37.5 L1261.3 36.2 L1261.3 34.9 L1261.2 33.7 L1261.2 32.4 L1261.1 31.1 L1261.0 29.9 L1260.9 28.6 L1260.7 27.3 L1260.6 26.1 L1260.4 24.8 L1260.2 23.6 L1259.9 22.3 L1259.7 21.1 L1259.4 19.8 L1259.1 18.6 L1258.7 17.3 L1258.4 16.1 L1258.0 14.8 L1257.6 13.6 L1257.2 12.4 L1256.8 11.1 L1256.3 9.9 L1255.8 8.7 L1255.3 7.5 L1254.8 6.3 L1254.3 5.1 L1253.7 3.9 L1253.1 2.7 L1252.5 1.5 L1251.9 0.3 L1251.2 -0.9 L1250.6 -2.1 L1249.9 -3.3 L1249.2 -4.5 L1248.4 -5.6 L1247.7 -6.8 L1246.9 -8.0 L1246.1 -9.1 L1245.3 -10.3 L1244.4 -11.4 L1243.6 -12.6 L1242.7 -13.7 L1241.8 -14.9 L1240.9 -16.0 L1240.0 -17.1 L1239.0 -18.2 L1238.0 -19.4 L1237.0 -20.5 L1236.0 -21.6 L1235.0 -22.7 L1233.9 -23.8 L1232.9 -24.9 L1231.8 -25.9 L1230.7 -27.0 L1229.5 -28.1 L1228.4 -29.1 L1227.2 -30.2 L1226.1 -31.3 L1224.9 -32.3 L1223.6 -33.3 L1222.4 -34.4 L1221.2 -35.4 L1219.9 -36.4 L1218.6 -37.5 L1217.3 -38.5 L1216.0 -39.5 L1214.6 -40.5 L1213.3 -41.5 L1211.9 -42.4 L1210.5 -43.4 L1209.1 -44.4 L1207.7 -45.3 L1206.2 -46.3 L1204.8 -47.3 L1203.3 -48.2 L1201.8 -49.1 L1200.3 -50.1 L1198.8 -51.0 L1197.3 -51.9 L1195.7 -52.8 L1194.2 -53.7 L1192.6 -54.6 L1191.0 -55.5 L1189.4 -56.4 L1187.8 -57.2 L1186.1 -58.1 L1184.5 -59.0 L1182.8 -59.8 L1181.1 -60.7 L1179.4 -61.5 L1177.7 -62.3 L1176.0 -63.1 L1174.2 -63.9 L1172.5 -64.8 L1170.7 -65.5 L1168.9 -66.3 L1167.1 -67.1 L1165.3 -67.9 L1163.5 -68.7 L1161.7 -69.4 L1159.9 -70.2 L1158.0 -70.9 L1156.1 -71.6 L1154.3 -72.4 L1152.4 -73.1 L1150.5 -73.8 L1148.5 -74.5 L1146.6 -75.2 L1144.7 -75.9 L1142.7 -76.5 L1140.8 -77.2 L1138.8 -77.9 L1136.8 -78.5 L1134.8 -79.1 L1132.8 -79.8 L1130.8 -80.4 L1128.8 -81.0 L1126.7 -81.6 L1124.7 -82.2 L1122.6 -82.8 L1120.5 -83.4 L1118.5 -84.0 L1116.4 -84.5 L1114.3 -85.1 L1112.2 -85.6 L1110.1 -86.2 L1107.9 -86.7 L1105.8 -87.2 L1103.7 -87.7 L1101.5 -88.3 L1099.4 -88.7 L1097.2 -89.2 L1095.0 -89.7 L1092.8 -90.2 L1090.6 -90.6 L1088.5 -91.1 L1086.2 -91.5 L1084.0 -92.0 L1081.8 -92.4 L1079.6 -92.8 L1077.3 -93.2 L1075.1 -93.6 L1072.9 -94.0 L1070.6 -94.4 L1068.3 -94.7 L1066.1 -95.1 L1063.8 -95.5 L1061.5 -95.8 L1059.2 -96.1 L1056.9 -96.5 L1054.6 -96.8 L1052.3 -97.1 L1050.0 -97.4 L1047.7 -97.7 L1045.4 -97.9 L1043.1 -98.2 L1040.7 -98.5 L1038.4 -98.7 L1036.0 -99.0 L1033.7 -99.2 L1031.4 -99.4 L1029.0 -99.6 L1026.6 -99.8 L1024.3 -100.0 L1021.9 -100.2 L1019.6 -100.4 L1017.2 -100.6 L1014.8 -100.7 L1012.4 -100.9 L1010.1 -101.0 L1007.7 -101.1 L1005.3 -101.3 L1002.9 -101.4 L1000.5 -101.5 L998.1 -101.6 L995.7 -101.7 L993.3 -101.7 L990.9 -101.8 L988.5 -101.9 L986.1 -101.9 L983.7 -101.9 L981.3 -102.0 L978.9 -102.0 L976.5 -102.0 L974.1 -102.0 L971.7 -102.0 L969.2 -102.0 L966.8 -101.9 L964.4 -101.9 L962.0 -101.9 L959.6 -101.8 L957.2 -101.7 L954.8 -101.7 L952.4 -101.6 L950.0 -101.5 L947.5 -101.4 L945.1 -101.3 L942.7 -101.2 L940.3 -101.0 L937.9 -100.9 L935.5 -100.7 L933.1 -100.6 L930.7 -100.4 L928.3 -100.2 L925.9 -100.1 L923.5 -99.9 L921.1 -99.7 L918.7 -99.4 L916.3 -99.2 L913.9 -99.0 L911.5 -98.8 L909.2 -98.5 L906.8 -98.2 L904.4 -98.0 L902.0 -97.7 L899.7 -97.4 L897.3 -97.1 L894.9 -96.8 L892.6 -96.5 L890.2 -96.2 L887.9 -95.9 L885.5 -95.5 L883.2 -95.2 L880.8 -94.8 L878.5 -94.4 L876.2 -94.1 L873.8 -93.7 L871.5 -93.3 L869.2 -92.9 L866.9 -92.5 L864.6 -92.1 L862.3 -91.6 L860.0 -91.2 L857.7 -90.7 L855.5 -90.3 L853.2 -89.8 L850.9 -89.3 L848.7 -88.9 L846.4 -88.4 L844.1 -87.9 L841.9 -87.4 L839.7 -86.9 L837.4 -86.3 L835.2 -85.8 L833.0 -85.3 L830.8 -84.7 L828.6 -84.1 L826.4 -83.6 L824.2 -83.0 L822.1 -82.4 L819.9 -81.8 L817.8 -81.2 L815.6 -80.6 L813.5 -80.0 L811.3 -79.4 L809.2 -78.7 L807.1 -78.1 L805.0 -77.4 L802.9 -76.8 L800.8 -76.1 L798.7 -75.4 L796.7 -74.8 L794.6 -74.1 L792.6 -73.4 L790.5 -72.7 L788.5 -71.9 L786.5 -71.2 L784.5 -70.5 L782.5 -69.7 L780.5 -69.0 L778.6 -68.2 L776.6 -67.5 L774.6 -66.7 L772.7 -65.9 L770.8 -65.1 L768.9 -64.4 L767.0 -63.6 L765.1 -62.7 L763.2 -61.9 L761.3 -61.1 L759.5 -60.3 L757.6 -59.4 L755.8 -58.6 L754.0 -57.7 L752.2 -56.9 L750.4 -56.0 L748.6 -55.1 L746.8 -54.3 L745.1 -53.4 L743.4 -52.5 L741.6 -51.6 L739.9 -50.7 L738.2 -49.7 L736.6 -48.8 L734.9 -47.9 L733.2 -47.0 L731.6 -46.0 L730.0 -45.1 L728.4 -44.1 L726.8 -43.1 L725.2 -42.2 L723.6 -41.2 L722.1 -40.2 L720.5 -39.2 L719.0 -38.2 L717.5 -37.2 L716.0 -36.2 L714.6 -35.2 L713.1 -34.2 L711.7 -33.2 L710.2 -32.1 L708.8 -31.1 L707.4 -30.1 L706.1 -29.0 L704.7 -28.0 L703.4 -26.9 L702.0 -25.8 L700.7 -24.8 L699.5 -23.7 L698.2 -22.6 L696.9 -21.5 L695.7 -20.4 L694.5 -19.3 L693.3 -18.2 L692.1 -17.1 L690.9 -16.0 L689.8 -14.9 L688.6 -13.8 L687.5 -12.6 L686.4 -11.5 L685.4 -10.4 L684.3 -9.2 L683.3 -8.1 L682.3 -6.9 L681.3 -5.8 L680.3 -4.6 L679.3 -3.4 L678.4 -2.3 L677.5 -1.1 L676.6 0.1 L675.7 1.3 L674.8 2.4 L674.0 3.6 L673.2 4.8 L672.4 6.0 L671.6 7.2 L670.8 8.4 L670.1 9.6 L669.4 10.8 L668.7 12.0 L668.0 13.3 L667.3 14.5 L666.7 15.7 L666.1 16.9 L665.5 18.1 L664.9 19.4 L664.4 20.6 L663.8 21.8 L663.3 23.1 L662.9 24.3 L662.4 25.6 L661.9 26.8 L661.5 28.1 L661.1 29.3 L660.7 30.6 L660.4 31.8 L660.1 33.1 L659.7 34.3 L659.5 35.6 L659.2 36.8 L658.9 38.1 L658.7 39.4 Z" fill="none" stroke="#a9adb0" stroke-width="1"/>
<rect x="311.5" y="84.5" width="19" height="18" fill="#c4303a" stroke="rgba(0,0,0,0.25)" stroke-width="1"/>
<rect x="311.5" y="102.5" width="19" height="18" fill="#c45a34" stroke="rgba(0,0,0,0.25)" stroke-width="1"/>
<rect x="311.5" y="120.5" width="19" height="18" fill="#c08c34" stroke="rgba(0,0,0,0.25)" stroke-width="1"/>
<rect x="311.5" y="138.5" width="19" height="18" fill="#bcbc30" stroke="rgba(0,0,0,0.25)" stroke-width="1"/>
<rect x="311.5" y="156.5" width="19" height="18" fill="#8cbc30" stroke="rgba(0,0,0,0.25)" stroke-width="1"/>
<rect x="311.5" y="174.5" width="19" height="18" fill="#50bc34" stroke="rgba(0,0,0,0.25)" stroke-width="1"/>
<rect x="311.5" y="192.5" width="19" height="18" fill="#30bc40" stroke="rgba(0,0,0,0.25)" stroke-width="1"/>
<rect x="311.5" y="210.5" width="19" height="18" fill="#30bc70" stroke="rgba(0,0,0,0.25)" stroke-width="1"/>
<rect x="311.5" y="228.5" width="19" height="18" fill="#30bca4" stroke="rgba(0,0,0,0.25)" stroke-width="1"/>
<rect x="311.5" y="246.5" width="19" height="18" fill="#30a4c8" stroke="rgba(0,0,0,0.25)" stroke-width="1"/>
<rect x="311.5" y="264.5" width="19" height="18" fill="#3070c4" stroke="rgba(0,0,0,0.25)" stroke-width="1"/>
</svg>
<div class="t" style="left:310.8px;top:67.69px;font-size:11px;color:#000;letter-spacing:-0.28px;">Geschwindigkeit (mm/Sek)</div>

<div class="t" style="left:336.5px;top:88.69px;font-size:11px;color:#000;">170.0</div>

<div class="t" style="left:336.5px;top:106.69px;font-size:11px;color:#000;">154.4</div>

<div class="t" style="left:336.5px;top:124.69px;font-size:11px;color:#000;">138.8</div>

<div class="t" style="left:336.5px;top:142.69px;font-size:11px;color:#000;">123.2</div>

<div class="t" style="left:336.5px;top:160.69px;font-size:11px;color:#000;">107.6</div>

<div class="t" style="left:336.5px;top:178.69px;font-size:11px;color:#000;">92.0</div>

<div class="t" style="left:336.5px;top:196.69px;font-size:11px;color:#000;">76.4</div>

<div class="t" style="left:336.5px;top:214.69px;font-size:11px;color:#000;">60.8</div>

<div class="t" style="left:336.5px;top:232.69px;font-size:11px;color:#000;">45.2</div>

<div class="t" style="left:336.5px;top:250.69px;font-size:11px;color:#000;">29.6</div>

<div class="t" style="left:336.5px;top:268.69px;font-size:11px;color:#000;">14.0</div>

<div class="t" style="left:1048.5px;top:67.69px;font-size:11px;color:#000;letter-spacing:-0.29px;">Vorschaumodus</div>

<div class="t" style="left:310.2px;top:933.29px;font-size:11px;color:#000;letter-spacing:-0.15px;">Position Werkzeugkopf</div>

<div class="t" style="left:310.2px;top:951.29px;font-size:11px;color:#000;">X: 100.000</div>

<div class="t" style="left:310.2px;top:969.19px;font-size:11px;color:#000;">Y: 100.000</div>

<div class="t" style="left:310.2px;top:986.99px;font-size:11px;color:#000;">Z: 486.300</div>

</body></html>
